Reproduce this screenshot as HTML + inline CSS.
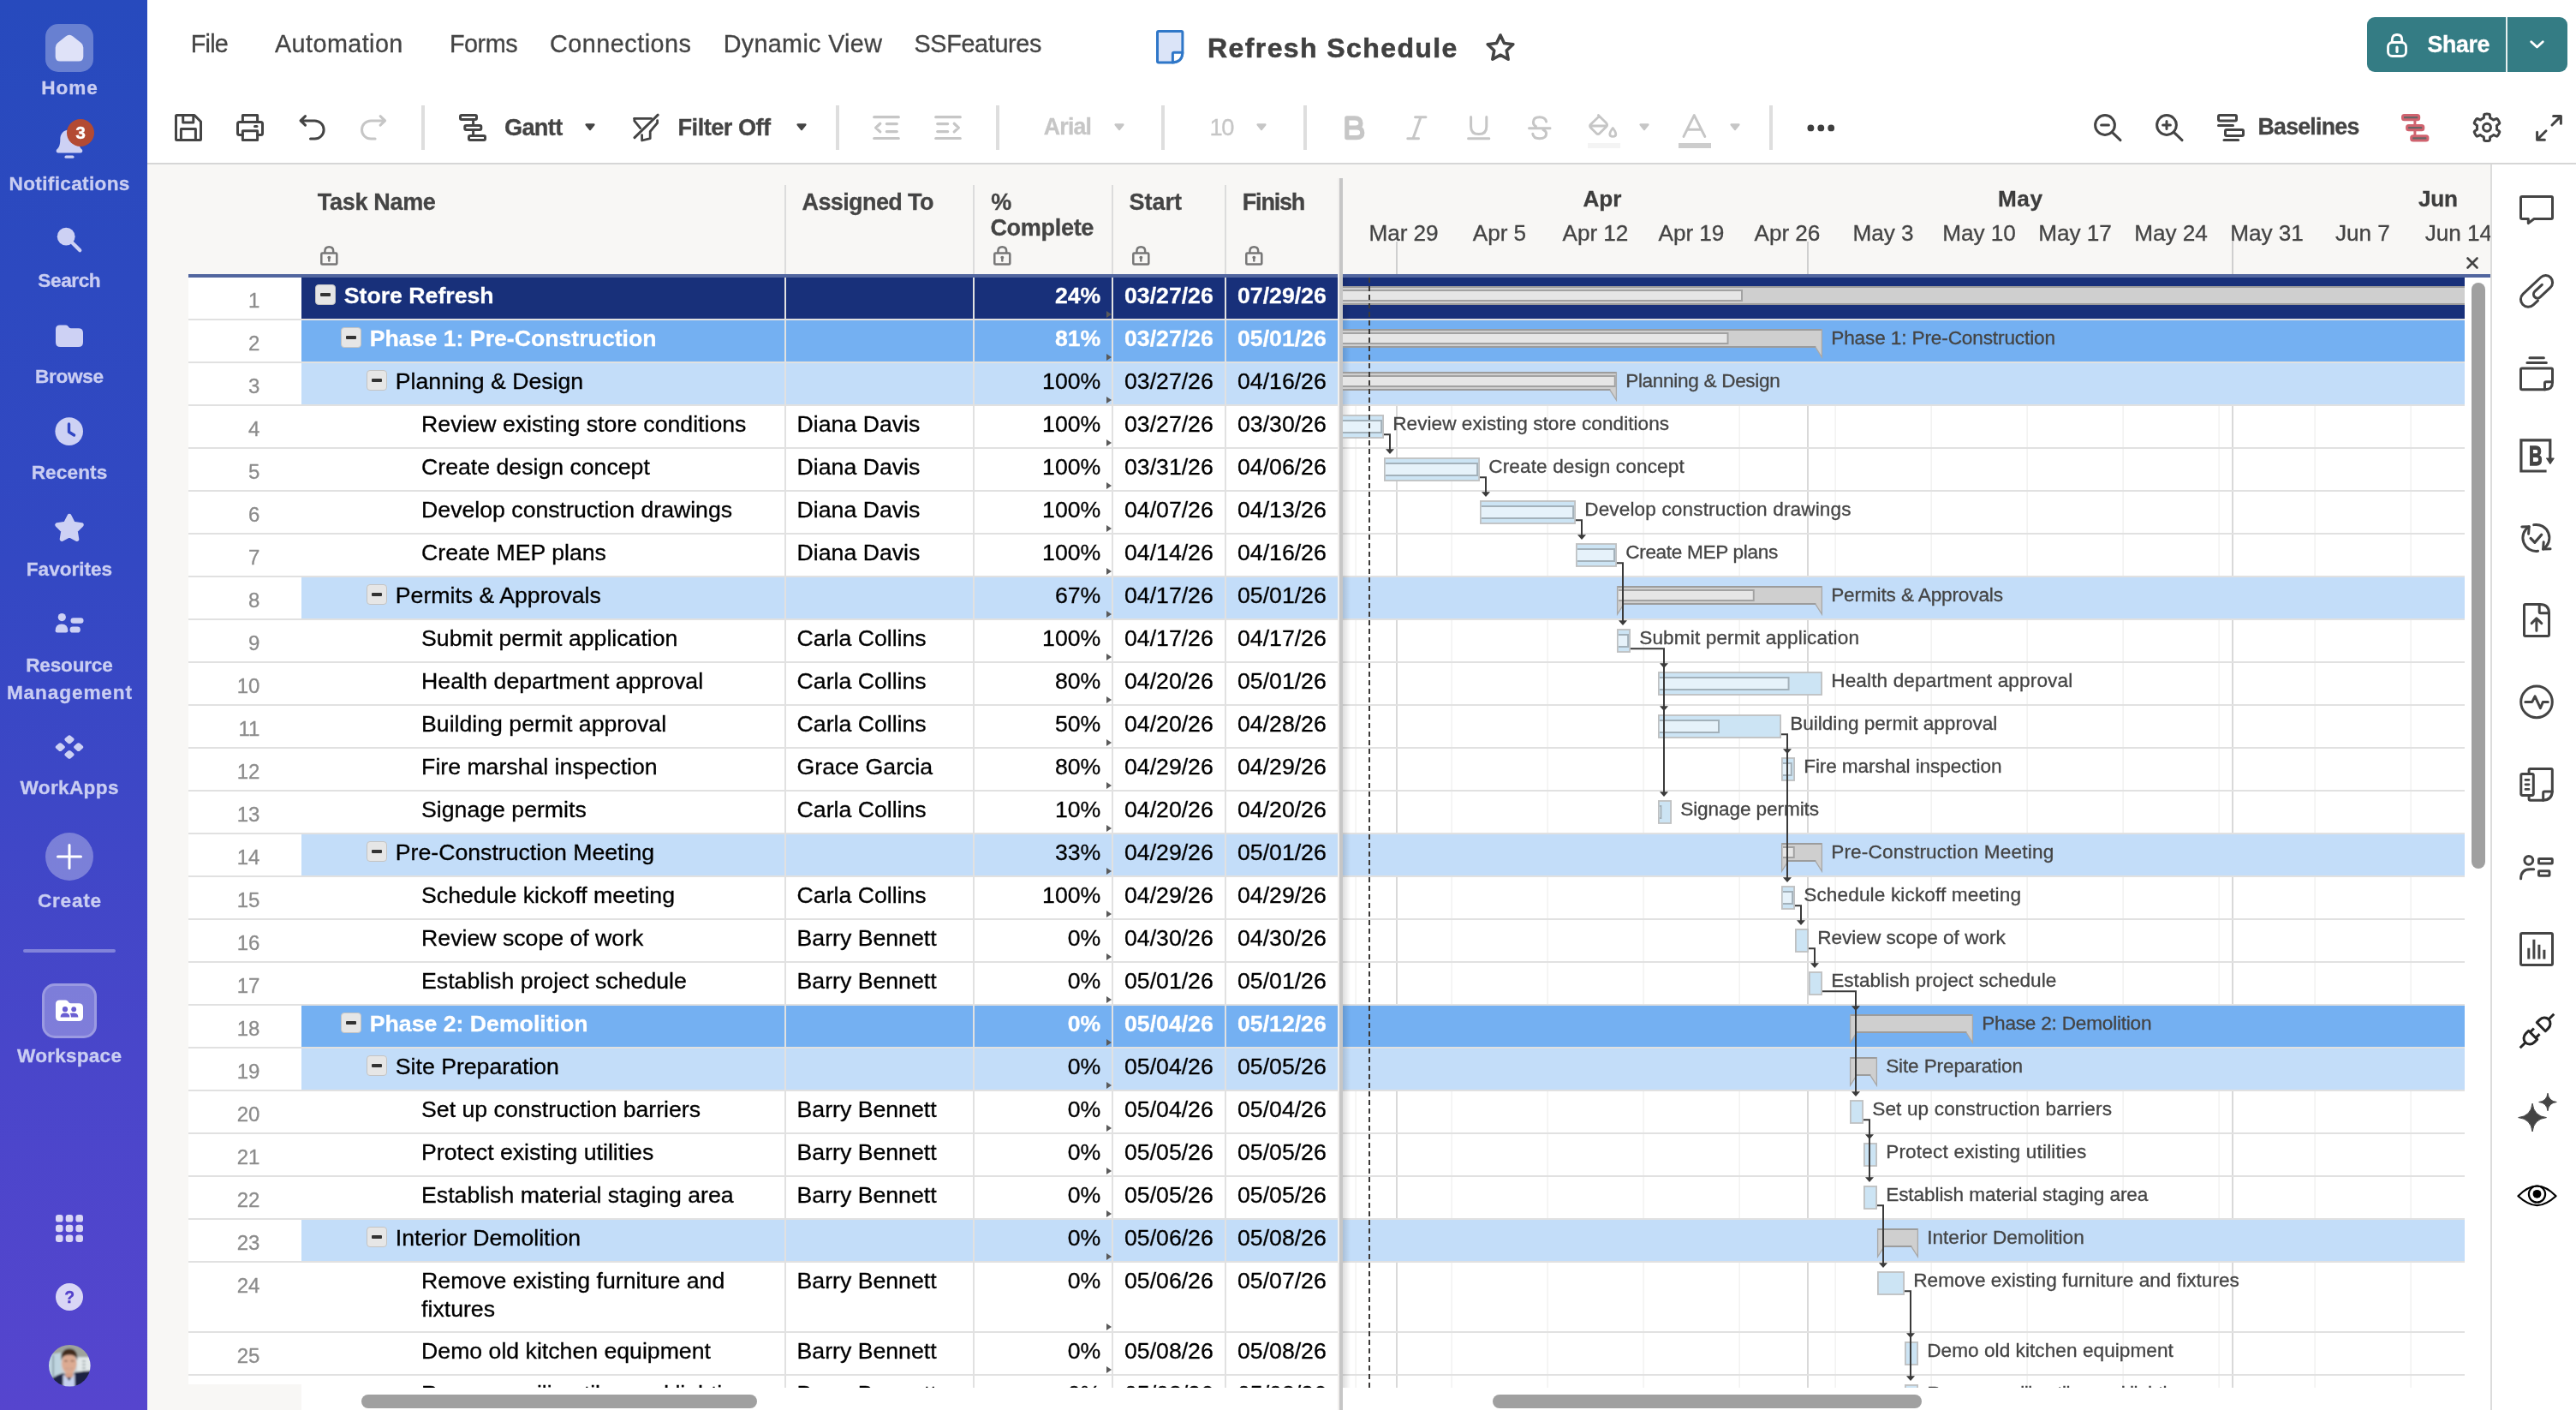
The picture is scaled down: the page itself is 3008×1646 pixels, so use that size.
<!DOCTYPE html>
<html lang="en"><head><meta charset="utf-8"><meta name="viewport" content="width=3008"><title>Refresh Schedule</title><style>
html,body{margin:0;padding:0}
body{width:3008px;height:1646px;overflow:hidden;background:#f8f7f5;position:relative;font-family:"Liberation Sans",sans-serif;}
#app{position:absolute;left:0;top:0;width:3008px;height:1646px;will-change:transform;}
.t{position:absolute;line-height:1;white-space:nowrap;-webkit-text-stroke:0.3px currentColor;}
.b{position:absolute;box-sizing:border-box;}
svg{overflow:visible}
svg text{font-family:"Liberation Sans",sans-serif;stroke:#444;stroke-width:.3px;}
</style></head><body>
<div id="app">
<div class="b" style="left:0.00px;top:0.00px;width:172.00px;height:1646.00px;background:linear-gradient(180deg,#274abd 0%,#3348c3 40%,#4946ca 75%,#5645ce 100%);"></div>
<div class="b" style="left:53.00px;top:27.60px;width:56.00px;height:56.00px;background:rgba(255,255,255,.30);border-radius:15px;"></div>
<svg class="b" style="left:61.00px;top:35.00px;" width="40" height="40" viewBox="0 0 40 40"><path d="M16.4 8.2 Q20 5.4 23.6 8.2 L33 15.8 Q35.3 17.6 35.3 20.4 V31 Q35.3 35.5 30.8 35.5 H9.2 Q4.7 35.5 4.7 31 V20.4 Q4.7 17.6 7 15.8 Z" fill="#dfe2f8" stroke="#dfe2f8" stroke-width="2" stroke-linejoin="round"/></svg>
<span class="t" style="left:48.20px;top:92.27px;font-size:22.60px;color:#c9cdf2;letter-spacing:0.937px;font-weight:700;">Home</span>
<svg class="b" style="left:61.00px;top:148.00px;" width="40" height="40" viewBox="0 0 40 40"><path d="M20 3.6 C12.5 3.6 9.3 9 9.3 15 C9.3 21.5 7.6 24.5 5.3 26.6 C4.2 27.7 4.6 30.6 6.8 30.6 H33.2 C35.4 30.6 35.8 27.7 34.7 26.6 C32.4 24.5 30.7 21.5 30.7 15 C30.7 9 27.5 3.6 20 3.6 Z" fill="#cdd1f4"/><rect x="14.5" y="33.6" width="11" height="3.2" rx="1.6" fill="#cdd1f4"/></svg>
<div class="b" style="left:78.00px;top:139.00px;width:32.00px;height:32.00px;background:#b34a33;border-radius:16px;"></div>
<span class="t" style="left:88.16px;top:143.92px;font-size:21.00px;color:#fff;font-weight:700;">3</span>
<span class="t" style="left:10.60px;top:204.07px;font-size:22.60px;color:#c9cdf2;letter-spacing:0.328px;font-weight:700;">Notifications</span>
<svg class="b" style="left:61.00px;top:260.00px;" width="40" height="40" viewBox="0 0 40 40"><circle cx="16.2" cy="16.2" r="10.4" fill="#cdd1f4"/><path d="M23 23 L32.3 32.3" stroke="#cdd1f4" stroke-width="4.2" stroke-linecap="round"/></svg>
<span class="t" style="left:44.35px;top:317.17px;font-size:22.60px;color:#c9cdf2;letter-spacing:-0.416px;font-weight:700;">Search</span>
<svg class="b" style="left:61.00px;top:372.00px;" width="40" height="40" viewBox="0 0 40 40"><path d="M4 12.5 Q4 7.6 9 7.6 H15.5 Q17.5 7.6 18.6 9 L19.6 10.2 Q20.4 11.2 22 11.2 H30.5 Q36 11.2 36 16.5 V27.5 Q36 33 30.5 33 H9.5 Q4 33 4 27.5 Z" fill="#cdd1f4"/></svg>
<span class="t" style="left:41.00px;top:428.77px;font-size:22.60px;color:#c9cdf2;letter-spacing:-0.328px;font-weight:700;">Browse</span>
<svg class="b" style="left:61.00px;top:484.00px;" width="40" height="40" viewBox="0 0 40 40"><circle cx="19.7" cy="19.6" r="16.3" fill="#cdd1f4"/><path d="M19.5 11 V20.3 L25.5 24" stroke="#3147c4" stroke-width="3.4" fill="none" stroke-linecap="round" stroke-linejoin="round"/></svg>
<span class="t" style="left:36.65px;top:541.27px;font-size:22.60px;color:#c9cdf2;letter-spacing:0.129px;font-weight:700;">Recents</span>
<svg class="b" style="left:61.00px;top:596.00px;" width="40" height="40" viewBox="0 0 40 40"><path d="M20.00 6.30 L24.47 15.15 L34.27 16.66 L27.23 23.65 L28.82 33.44 L20.00 28.90 L11.18 33.44 L12.77 23.65 L5.73 16.66 L15.53 15.15 Z" fill="#cdd1f4" stroke="#cdd1f4" stroke-width="5" stroke-linejoin="round"/></svg>
<span class="t" style="left:30.85px;top:653.77px;font-size:22.60px;color:#c9cdf2;letter-spacing:-0.023px;font-weight:700;">Favorites</span>
<svg class="b" style="left:61.00px;top:708.00px;" width="40" height="40" viewBox="0 0 40 40"><circle cx="11.3" cy="12.6" r="4.6" fill="#cdd1f4"/><path d="M3.6 28.5 Q3.6 20.5 11 20.5 Q18.3 20.5 18.3 28.5 Q18.3 30.6 16 30.6 H6 Q3.6 30.6 3.6 28.5 Z" fill="#cdd1f4"/><rect x="21.5" y="13.3" width="15" height="6.4" rx="3.2" fill="#cdd1f4"/><rect x="20.6" y="23.4" width="12.2" height="7.2" rx="3.4" fill="#cdd1f4"/></svg>
<span class="t" style="left:30.20px;top:765.67px;font-size:22.60px;color:#c9cdf2;letter-spacing:-0.200px;font-weight:700;">Resource</span>
<span class="t" style="left:7.90px;top:797.67px;font-size:22.60px;color:#c9cdf2;letter-spacing:0.896px;font-weight:700;">Management</span>
<svg class="b" style="left:61.00px;top:852.00px;" width="40" height="40" viewBox="0 0 40 40"><g transform="translate(20.00 11.30) scale(1 .88) rotate(45)"><rect x="-4.65" y="-4.65" width="9.30" height="9.30" rx="2.7" fill="#cdd1f4"/></g><g transform="translate(9.30 20.10) scale(1 .88) rotate(45)"><rect x="-4.65" y="-4.65" width="9.30" height="9.30" rx="2.7" fill="#cdd1f4"/></g><g transform="translate(30.70 20.10) scale(1 .88) rotate(45)"><rect x="-4.65" y="-4.65" width="9.30" height="9.30" rx="2.7" fill="#cdd1f4"/></g><g transform="translate(20.00 28.90) scale(1 .88) rotate(45)"><rect x="-4.65" y="-4.65" width="9.30" height="9.30" rx="2.7" fill="#cdd1f4"/></g></svg>
<span class="t" style="left:23.50px;top:909.37px;font-size:22.60px;color:#c9cdf2;letter-spacing:0.344px;font-weight:700;">WorkApps</span>
<div class="b" style="left:53.00px;top:972.30px;width:56.00px;height:56.00px;background:rgba(255,255,255,.31);border-radius:28px;"></div>
<svg class="b" style="left:61.00px;top:980.30px;" width="40" height="40" viewBox="0 0 40 40"><path d="M20 6.5 V33.5 M6.5 20 H33.5" stroke="#fff" stroke-width="3" stroke-linecap="round"/></svg>
<span class="t" style="left:43.90px;top:1041.27px;font-size:22.60px;color:#c9cdf2;letter-spacing:0.770px;font-weight:700;">Create</span>
<div class="b" style="left:27.30px;top:1108.00px;width:107.30px;height:4.00px;background:rgba(255,255,255,.33);border-radius:2px;"></div>
<div class="b" style="left:48.80px;top:1148.00px;width:64.40px;height:64.00px;background:rgba(255,255,255,.30);border:3px solid rgba(255,255,255,.22);border-radius:15px;"></div>
<svg class="b" style="left:61.00px;top:1160.00px;" width="40" height="40" viewBox="0 0 40 40"><path d="M4 12 Q4 7.4 8.8 7.4 H15.2 Q17 7.4 18.2 8.8 L19.4 10.2 Q20.3 11.2 21.8 11.2 H31 Q36 11.2 36 16.2 V27 Q36 32 31 32 H9 Q4 32 4 27 Z" fill="#fff"/><circle cx="15" cy="18.2" r="3.1" fill="#6a5fd2"/><path d="M9.6 27.4 Q9.6 22.6 15 22.6 Q20.4 22.6 20.4 27.4 Z" fill="#6a5fd2"/><circle cx="25.2" cy="18.2" r="2.9" fill="#6a5fd2"/><path d="M22 27.4 Q21.8 24 20.6 22.9 Q22.5 22.3 25.2 22.4 Q30.4 22.6 30.4 27.4 Z" fill="#6a5fd2"/></svg>
<span class="t" style="left:20.00px;top:1221.57px;font-size:22.60px;color:#c9cdf2;letter-spacing:0.228px;font-weight:700;">Workspace</span>
<svg class="b" style="left:65.00px;top:1418.00px;" width="32" height="32" viewBox="0 0 32 32"><rect x="0.0" y="0.0" width="8.6" height="8.6" rx="3.2" fill="#d9d6f5"/><rect x="11.7" y="0.0" width="8.6" height="8.6" rx="3.2" fill="#d9d6f5"/><rect x="23.4" y="0.0" width="8.6" height="8.6" rx="3.2" fill="#d9d6f5"/><rect x="0.0" y="11.7" width="8.6" height="8.6" rx="3.2" fill="#d9d6f5"/><rect x="11.7" y="11.7" width="8.6" height="8.6" rx="3.2" fill="#d9d6f5"/><rect x="23.4" y="11.7" width="8.6" height="8.6" rx="3.2" fill="#d9d6f5"/><rect x="0.0" y="23.4" width="8.6" height="8.6" rx="3.2" fill="#d9d6f5"/><rect x="11.7" y="23.4" width="8.6" height="8.6" rx="3.2" fill="#d9d6f5"/><rect x="23.4" y="23.4" width="8.6" height="8.6" rx="3.2" fill="#d9d6f5"/></svg>
<div class="b" style="left:65.00px;top:1497.60px;width:32.40px;height:32.40px;background:#d9d6f5;border-radius:50%;"></div>
<span class="t" style="left:75.24px;top:1504.59px;font-size:19.50px;color:#5340cb;font-weight:700;">?</span>
<svg class="b" style="left:56.70px;top:1569.80px;" width="48.6" height="48.6" viewBox="0 0 48.6 48.6"><defs><clipPath id="avc"><circle cx="24.3" cy="24.3" r="24.3"/></clipPath><filter id="avb" x="-10%" y="-10%" width="120%" height="120%"><feGaussianBlur stdDeviation="0.9"/></filter></defs><g clip-path="url(#avc)"><g filter="url(#avb)"><rect x="-3" y="-3" width="55" height="55" fill="#c9d3d8"/><rect x="-3" y="-3" width="55" height="17" fill="#9ea39c"/><path d="M-3 12 L14 9 V40 H-3 Z" fill="#bfd5e0"/><rect x="4" y="12" width="2.2" height="30" fill="#93a6b0"/><path d="M33 15 H52 V34 H33 Z" fill="#e3e9ea"/><path d="M39 18 h4 v2 h-4 z M39 22 h4 v2 h-4 z M39 26 h4 v2 h-4 z M39 30 h4 v2 h-4 z" fill="#a9b4b8"/><path d="M2 41 Q10 34 17 33 L24 38 L31 32 Q40 31 50 30 V52 H2 Z" fill="#1f2442"/><path d="M16.5 35 L19.4 35.5 L23.8 42 L28.4 34.6 L30.4 34 L30.5 52 H16.5 Z" fill="#c6d2ee"/><rect x="19.4" y="28" width="9" height="10" fill="#d39f88"/><ellipse cx="23.8" cy="21.6" rx="8.7" ry="12.2" fill="#dcaa92"/><path d="M14.6 18 Q13.8 4.4 24 4.4 Q34.2 4.4 33.2 18 Q31.8 11.6 24 11.6 Q16.2 11.6 14.6 18 Z" fill="#40291e"/><path d="M19.6 27.4 Q23.8 30.6 28 27.4 Q23.8 29 19.6 27.4 Z" fill="#f3ebe6" stroke="#b87f6e" stroke-width=".5"/><path d="M18 18.6 h4 M25.6 18.6 h4" stroke="#7a5546" stroke-width="1.1"/></g></g></svg>
<div class="b" style="left:172.00px;top:0.00px;width:2836.00px;height:190.00px;background:#fff;"></div>
<div class="b" style="left:172.00px;top:190.00px;width:2836.00px;height:2.00px;background:#d6d6d6;"></div>
<span class="t" style="left:222.80px;top:36.95px;font-size:28.76px;color:#444;letter-spacing:-0.782px;">File</span>
<span class="t" style="left:321.00px;top:36.95px;font-size:28.76px;color:#444;letter-spacing:0.434px;">Automation</span>
<span class="t" style="left:525.00px;top:36.95px;font-size:28.76px;color:#444;letter-spacing:-0.471px;">Forms</span>
<span class="t" style="left:642.00px;top:36.95px;font-size:28.76px;color:#444;letter-spacing:0.511px;">Connections</span>
<span class="t" style="left:844.70px;top:36.95px;font-size:28.76px;color:#444;letter-spacing:0.329px;">Dynamic View</span>
<span class="t" style="left:1067.40px;top:36.95px;font-size:28.76px;color:#444;letter-spacing:-0.308px;">SSFeatures</span>
<svg class="b" style="left:1349.60px;top:35.20px;" width="32.4" height="39.4" viewBox="0 0 32.4 39.4"><path d="M3 1.5 H29.4 Q30.9 1.5 30.9 3 V25 Q30.9 37.9 18.5 37.9 H3 Q1.5 37.9 1.5 36.4 V3 Q1.5 1.5 3 1.5 Z" fill="#dbe4f8" stroke="#2f77c8" stroke-width="3"/><path d="M30.9 26.3 H21 Q19.4 26.3 19.4 27.9 V37.9 Q30.4 37.4 30.9 26.3 Z" fill="#fff" stroke="#2f77c8" stroke-width="3" stroke-linejoin="round"/></svg>
<span class="t" style="left:1410.00px;top:39.51px;font-size:32.00px;color:#404040;letter-spacing:1.406px;font-weight:700;-webkit-text-stroke:0.55px #404040;">Refresh Schedule</span>
<svg class="b" style="left:1735.00px;top:37.50px;" width="34" height="35" viewBox="0 0 34 35"><path d="M17.00 3.00 L21.47 12.45 L31.84 13.78 L24.23 20.95 L26.17 31.22 L17.00 26.20 L7.83 31.22 L9.77 20.95 L2.16 13.78 L12.53 12.45 Z" fill="none" stroke="#444" stroke-width="3.6" stroke-linejoin="round"/></svg>
<div class="b" style="left:2764.00px;top:19.80px;width:234.00px;height:64.00px;background:#347c84;border-radius:9px;"></div>
<div class="b" style="left:2925.70px;top:19.80px;width:2.40px;height:64.00px;background:#e6efef;"></div>
<svg class="b" style="left:2786.50px;top:38.50px;" width="24" height="28" viewBox="0 0 24 28"><rect x="1.5" y="10.5" width="21" height="16" rx="5" fill="none" stroke="#fff" stroke-width="2.8"/><path d="M6.3 10.5 V7.2 Q6.3 1.5 12 1.5 Q17.7 1.5 17.7 7.2 V10.5" fill="none" stroke="#fff" stroke-width="2.8"/><path d="M12 16 V21.5" stroke="#fff" stroke-width="3.2" stroke-linecap="round"/></svg>
<span class="t" style="left:2834.60px;top:38.86px;font-size:26.74px;color:#fff;letter-spacing:-0.358px;font-weight:700;">Share</span>
<svg class="b" style="left:2953.70px;top:47.00px;" width="17" height="10" viewBox="0 0 17 10"><path d="M1.7 1.7 L8.5 8 L15.3 1.7" fill="none" stroke="#fff" stroke-width="2.8" stroke-linecap="round" stroke-linejoin="round"/></svg>
<svg class="b" style="left:204.00px;top:133.00px;" width="32" height="32" viewBox="0 0 32 32"><g fill="none" stroke="#444" stroke-width="3" stroke-linecap="round" stroke-linejoin="round"><path d="M1.5 2.5 Q1.5 1.5 2.5 1.5 H23 L30.5 9 V29.5 Q30.5 30.5 29.5 30.5 H2.5 Q1.5 30.5 1.5 29.5 Z"/><path d="M9.7 1.5 V10 H21.8 V1.5"/><path d="M7.4 30.5 V17.6 H24.4 V30.5"/></g></svg>
<svg class="b" style="left:276.20px;top:133.00px;" width="32" height="32" viewBox="0 0 32 32"><g fill="none" stroke="#444" stroke-width="3" stroke-linecap="round" stroke-linejoin="round"><path d="M7.4 24.5 H3.5 Q1.5 24.5 1.5 22.5 V11.5 Q1.5 9.5 3.5 9.5 H28.5 Q30.5 9.5 30.5 11.5 V22.5 Q30.5 24.5 28.5 24.5 H24.6"/><path d="M7.4 9.5 V1.5 H24.6 V9.5"/><rect x="7.4" y="19.7" width="17.2" height="10.8"/><path d="M21.5 14.6 H24"/></g></svg>
<svg class="b" style="left:348.70px;top:134.00px;" width="32" height="30" viewBox="0 0 32 30"><g fill="none" stroke="#444" stroke-width="3" stroke-linecap="round" stroke-linejoin="round"><path d="M7.5 1.6 L2 6.9 L7.5 12.2 M2.4 6.9 H18.5 A10.6 10.6 0 0 1 18.5 28.1 H13.5"/></g></svg>
<svg class="b" style="left:420.50px;top:134.00px;" width="32" height="30" viewBox="0 0 32 30"><g transform="translate(30.6 0) scale(-1 1)" fill="none" stroke="#c6c6c6" stroke-width="3" stroke-linecap="round" stroke-linejoin="round"><path d="M7.5 1.6 L2 6.9 L7.5 12.2 M2.4 6.9 H18.5 A10.6 10.6 0 0 1 18.5 28.1 H13.5"/></g></svg>
<div class="b" style="left:492.00px;top:123.20px;width:4.00px;height:51.60px;background:#dedede;"></div>
<svg class="b" style="left:536.00px;top:133.00px;" width="32" height="32" viewBox="0 0 32 32"><g fill="none" stroke="#444" stroke-width="3" stroke-linecap="round" stroke-linejoin="round"><rect x="1.5" y="1.5" width="19" height="5" rx="1.5"/><rect x="6.8" y="13.6" width="19" height="5" rx="1.5"/><rect x="11.5" y="25.5" width="19" height="5" rx="1.5"/><path d="M16.6 6.5 V13.6 M16.6 18.6 V25.5"/></g></svg>
<span class="t" style="left:589.00px;top:134.89px;font-size:27.18px;color:#444;letter-spacing:-0.691px;font-weight:700;">Gantt</span>
<svg class="b" style="left:683.00px;top:144.40px;" width="12" height="8.6" viewBox="0 0 12 8.6"><path d="M1.6 1.4 H10.40 L6.00 7.00 Z" fill="#444" stroke="#444" stroke-width="2.4" stroke-linejoin="round"/></svg>
<svg class="b" style="left:739.00px;top:133.00px;" width="31" height="32" viewBox="0 0 31 32"><g fill="none" stroke="#444" stroke-width="2.8" stroke-linecap="round" stroke-linejoin="round"><path d="M1.8 5.3 H21.5"/><path d="M1.8 5.3 V8.2 L8.7 16.6"/><path d="M28.6 7.6 V10.5 L20.2 20.5 V28.6 L10.6 31 V24.6"/><path d="M29.2 1.2 L2 27.6" stroke-width="3"/></g></svg>
<span class="t" style="left:791.50px;top:134.89px;font-size:27.18px;color:#444;letter-spacing:-0.505px;font-weight:700;">Filter Off</span>
<svg class="b" style="left:929.80px;top:144.40px;" width="12" height="8.6" viewBox="0 0 12 8.6"><path d="M1.6 1.4 H10.40 L6.00 7.00 Z" fill="#444" stroke="#444" stroke-width="2.4" stroke-linejoin="round"/></svg>
<div class="b" style="left:975.50px;top:123.20px;width:4.00px;height:51.60px;background:#dedede;"></div>
<svg class="b" style="left:1018.80px;top:134.80px;" width="32" height="28.2" viewBox="0 0 32 28.2"><g fill="none" stroke="#c6c6c6" stroke-width="3.2" stroke-linecap="round" stroke-linejoin="round"><path d="M1.7 1.7 H30.3 M1.7 26.5 H30.3 M16.3 9.6 H28.3 M16.3 18.6 H28.3 M8.8 9.3 L3.6 14.1 L8.8 18.9"/></g></svg>
<svg class="b" style="left:1091.00px;top:134.80px;" width="32" height="28.2" viewBox="0 0 32 28.2"><g transform="translate(32 0) scale(-1 1)" fill="none" stroke="#c6c6c6" stroke-width="3.2" stroke-linecap="round" stroke-linejoin="round"><path d="M1.7 1.7 H30.3 M1.7 26.5 H30.3 M16.3 9.6 H28.3 M16.3 18.6 H28.3 M8.8 9.3 L3.6 14.1 L8.8 18.9"/></g></svg>
<div class="b" style="left:1163.20px;top:123.20px;width:4.00px;height:51.60px;background:#dedede;"></div>
<span class="t" style="left:1218.80px;top:135.26px;font-size:26.74px;color:#c6c6c6;letter-spacing:-0.814px;font-weight:700;">Arial</span>
<svg class="b" style="left:1301.00px;top:144.40px;" width="12" height="8.6" viewBox="0 0 12 8.6"><path d="M1.6 1.4 H10.40 L6.00 7.00 Z" fill="#c6c6c6" stroke="#c6c6c6" stroke-width="2.4" stroke-linejoin="round"/></svg>
<div class="b" style="left:1356.00px;top:123.20px;width:4.00px;height:51.60px;background:#dedede;"></div>
<span class="t" style="left:1412.50px;top:134.97px;font-size:27.33px;color:#c6c6c6;letter-spacing:-1.395px;">10</span>
<svg class="b" style="left:1467.00px;top:144.40px;" width="12" height="8.6" viewBox="0 0 12 8.6"><path d="M1.6 1.4 H10.40 L6.00 7.00 Z" fill="#c6c6c6" stroke="#c6c6c6" stroke-width="2.4" stroke-linejoin="round"/></svg>
<div class="b" style="left:1521.60px;top:123.20px;width:4.00px;height:51.60px;background:#dedede;"></div>
<svg class="b" style="left:1569.80px;top:134.80px;" width="24" height="28.4" viewBox="0 0 24 28.4"><path d="M2.8 2.8 H12 Q19 2.8 19 9 Q19 14 13 14 H2.8 Z M2.8 14 H14 Q20.8 14 20.8 20 Q20.8 25.6 14 25.6 H2.8 Z" fill="none" stroke="#c6c6c6" stroke-width="5.2" stroke-linejoin="round"/></svg>
<svg class="b" style="left:1641.90px;top:134.80px;" width="25" height="28.4" viewBox="0 0 25 28.4"><g fill="none" stroke="#c6c6c6" stroke-width="3" stroke-linecap="round" stroke-linejoin="round"><path d="M10.5 1.7 H23 M1.8 26.7 H14.5 M17 1.7 L8 26.7"/></g></svg>
<svg class="b" style="left:1712.70px;top:134.80px;" width="28" height="28.4" viewBox="0 0 28 28.4"><g fill="none" stroke="#c6c6c6" stroke-width="3" stroke-linecap="round" stroke-linejoin="round"><path d="M4.6 1.6 V13 Q4.6 21.6 13.7 21.6 Q22.8 21.6 22.8 13 V1.6 M1.6 26.7 H25.8"/></g></svg>
<svg class="b" style="left:1784.00px;top:134.80px;" width="28" height="28.4" viewBox="0 0 28 28.4"><g fill="none" stroke="#c6c6c6" stroke-width="3" stroke-linecap="round" stroke-linejoin="round"><path d="M21.6 7 Q20.6 1.7 13.8 1.7 Q6.4 1.7 6.4 7.6 Q6.4 11 9.5 12.6 M1.6 14.7 H26 M18 16.6 Q21.6 18 21.6 21 Q21.6 26.7 13.8 26.7 Q6.6 26.7 5.8 21.2"/></g></svg>
<svg class="b" style="left:1855.00px;top:133.00px;" width="34" height="28" viewBox="0 0 34 28"><g fill="none" stroke="#c6c6c6" stroke-width="2.8" stroke-linecap="round" stroke-linejoin="round"><path d="M11.4 1.6 L20.6 10.6 Q22.6 12.8 20.6 15 L13 22.6 Q11 24.4 9 22.6 L2.4 16 Q0.8 14 2.4 12.2 L12.6 2.6 M2.4 14 H21"/><path d="M28.3 16.5 Q31.8 21 31.8 23.4 Q31.8 26.4 28.3 26.4 Q24.8 26.4 24.8 23.4 Q24.8 21 28.3 16.5 Z"/></g></svg>
<div class="b" style="left:1854.00px;top:167.00px;width:38.00px;height:5.60px;background:#f4f4f4;"></div>
<svg class="b" style="left:1914.00px;top:144.40px;" width="12" height="8.6" viewBox="0 0 12 8.6"><path d="M1.6 1.4 H10.40 L6.00 7.00 Z" fill="#c6c6c6" stroke="#c6c6c6" stroke-width="2.4" stroke-linejoin="round"/></svg>
<svg class="b" style="left:1963.60px;top:133.00px;" width="29" height="28" viewBox="0 0 29 28"><g fill="none" stroke="#c6c6c6" stroke-width="3" stroke-linecap="round" stroke-linejoin="round"><path d="M2 26.4 L14.3 1.6 L26.8 26.4 M6.2 18.2 H22.6"/></g></svg>
<div class="b" style="left:1960.00px;top:167.00px;width:38.00px;height:5.80px;background:#cdcdcd;"></div>
<svg class="b" style="left:2019.70px;top:144.40px;" width="12" height="8.6" viewBox="0 0 12 8.6"><path d="M1.6 1.4 H10.40 L6.00 7.00 Z" fill="#c6c6c6" stroke="#c6c6c6" stroke-width="2.4" stroke-linejoin="round"/></svg>
<div class="b" style="left:2066.00px;top:123.20px;width:4.00px;height:51.60px;background:#dedede;"></div>
<svg class="b" style="left:2109.70px;top:144.60px;" width="33" height="9" viewBox="0 0 33 9"><circle cx="4.4" cy="4.4" r="3.9" fill="#3f3f3f"/><circle cx="16.3" cy="4.4" r="3.9" fill="#3f3f3f"/><circle cx="28.2" cy="4.4" r="3.9" fill="#3f3f3f"/></svg>
<svg class="b" style="left:2444.80px;top:133.00px;" width="33" height="32" viewBox="0 0 33 32"><g fill="none" stroke="#444" stroke-width="3" stroke-linecap="round" stroke-linejoin="round"><circle cx="13" cy="13" r="11.4"/><path d="M21.3 21.3 L31 30.6"/><path d="M8.6 13 H17.4"/></g></svg>
<svg class="b" style="left:2517.00px;top:133.00px;" width="33" height="32" viewBox="0 0 33 32"><g fill="none" stroke="#444" stroke-width="3" stroke-linecap="round" stroke-linejoin="round"><circle cx="13" cy="13" r="11.4"/><path d="M21.3 21.3 L31 30.6"/><path d="M8.6 13 H17.4 M13 8.6 V17.4"/></g></svg>
<svg class="b" style="left:2588.90px;top:133.00px;" width="33" height="32" viewBox="0 0 33 32"><g fill="none" stroke="#444" stroke-width="3" stroke-linecap="round" stroke-linejoin="round"><rect x="1.5" y="1.5" width="21" height="6.6" rx="1.5"/><path d="M1.5 13.5 H18.5"/><rect x="9.5" y="18.5" width="21" height="7" rx="1.5"/><path d="M8 30.5 H24.6"/></g></svg>
<span class="t" style="left:2636.50px;top:135.26px;font-size:26.74px;color:#444;letter-spacing:-0.760px;font-weight:700;">Baselines</span>
<svg class="b" style="left:2803.90px;top:132.80px;" width="33" height="33" viewBox="0 0 33 33"><g fill="#666" stroke="#d0636f" stroke-width="3"><path d="M15.9 6 V26" fill="none"/><rect x="1.5" y="1.5" width="19.2" height="5.2" rx="2"/><rect x="6.6" y="13.6" width="19.2" height="5.2" rx="2"/><rect x="11.7" y="25.7" width="19.2" height="5.2" rx="2"/></g></svg>
<svg class="b" style="left:2886.00px;top:131.00px;" width="36" height="36" viewBox="0 0 36 36"><g fill="none" stroke="#444" stroke-width="3" stroke-linecap="round" stroke-linejoin="round"><path d="M18.00 2.10 L18.41 2.11 L18.82 2.12 L19.23 2.15 L19.64 2.19 L20.05 2.23 L20.46 2.29 L20.86 2.36 L21.21 2.69 L21.43 3.50 L21.53 4.62 L21.58 5.72 L21.66 6.53 L21.87 6.87 L22.16 6.97 L22.44 7.08 L22.72 7.20 L22.99 7.33 L23.27 7.46 L23.54 7.61 L23.80 7.75 L24.06 7.91 L24.32 8.07 L24.57 8.24 L24.82 8.42 L25.06 8.60 L25.30 8.79 L25.53 8.98 L25.93 8.99 L26.67 8.66 L27.65 8.15 L28.67 7.68 L29.48 7.46 L29.94 7.60 L30.20 7.92 L30.46 8.24 L30.70 8.57 L30.94 8.91 L31.17 9.25 L31.39 9.60 L31.60 9.95 L31.80 10.31 L31.99 10.67 L32.17 11.04 L32.34 11.41 L32.50 11.79 L32.66 12.17 L32.80 12.56 L32.69 13.03 L32.10 13.62 L31.18 14.27 L30.25 14.86 L29.59 15.34 L29.41 15.69 L29.46 15.99 L29.50 16.29 L29.54 16.59 L29.56 16.89 L29.58 17.19 L29.60 17.50 L29.60 17.80 L29.60 18.10 L29.58 18.41 L29.56 18.71 L29.54 19.01 L29.50 19.31 L29.46 19.61 L29.41 19.91 L29.59 20.26 L30.25 20.74 L31.18 21.33 L32.10 21.98 L32.69 22.57 L32.80 23.04 L32.66 23.43 L32.50 23.81 L32.34 24.19 L32.17 24.56 L31.99 24.93 L31.80 25.29 L31.60 25.65 L31.39 26.00 L31.17 26.35 L30.94 26.69 L30.70 27.03 L30.46 27.36 L30.20 27.68 L29.94 28.00 L29.48 28.14 L28.67 27.92 L27.65 27.45 L26.67 26.94 L25.93 26.61 L25.53 26.62 L25.30 26.81 L25.06 27.00 L24.82 27.18 L24.57 27.36 L24.32 27.53 L24.06 27.69 L23.80 27.85 L23.54 27.99 L23.27 28.14 L22.99 28.27 L22.72 28.40 L22.44 28.52 L22.16 28.63 L21.87 28.73 L21.66 29.07 L21.58 29.88 L21.53 30.98 L21.43 32.10 L21.21 32.91 L20.86 33.24 L20.46 33.31 L20.05 33.37 L19.64 33.41 L19.23 33.45 L18.82 33.48 L18.41 33.49 L18.00 33.50 L17.59 33.49 L17.18 33.48 L16.77 33.45 L16.36 33.41 L15.95 33.37 L15.54 33.31 L15.14 33.24 L14.79 32.91 L14.57 32.10 L14.47 30.98 L14.42 29.88 L14.34 29.07 L14.13 28.73 L13.84 28.63 L13.56 28.52 L13.28 28.40 L13.01 28.27 L12.73 28.14 L12.46 27.99 L12.20 27.85 L11.94 27.69 L11.68 27.53 L11.43 27.36 L11.18 27.18 L10.94 27.00 L10.70 26.81 L10.47 26.62 L10.07 26.61 L9.33 26.94 L8.35 27.45 L7.33 27.92 L6.52 28.14 L6.06 28.00 L5.80 27.68 L5.54 27.36 L5.30 27.03 L5.06 26.69 L4.83 26.35 L4.61 26.00 L4.40 25.65 L4.20 25.29 L4.01 24.93 L3.83 24.56 L3.66 24.19 L3.50 23.81 L3.34 23.43 L3.20 23.04 L3.31 22.57 L3.90 21.98 L4.82 21.33 L5.75 20.74 L6.41 20.26 L6.59 19.91 L6.54 19.61 L6.50 19.31 L6.46 19.01 L6.44 18.71 L6.42 18.41 L6.40 18.10 L6.40 17.80 L6.40 17.50 L6.42 17.19 L6.44 16.89 L6.46 16.59 L6.50 16.29 L6.54 15.99 L6.59 15.69 L6.41 15.34 L5.75 14.86 L4.82 14.27 L3.90 13.62 L3.31 13.03 L3.20 12.56 L3.34 12.17 L3.50 11.79 L3.66 11.41 L3.83 11.04 L4.01 10.67 L4.20 10.31 L4.40 9.95 L4.61 9.60 L4.83 9.25 L5.06 8.91 L5.30 8.57 L5.54 8.24 L5.80 7.92 L6.06 7.60 L6.52 7.46 L7.33 7.68 L8.35 8.15 L9.33 8.66 L10.07 8.99 L10.47 8.98 L10.70 8.79 L10.94 8.60 L11.18 8.42 L11.43 8.24 L11.68 8.07 L11.94 7.91 L12.20 7.75 L12.46 7.61 L12.73 7.46 L13.01 7.33 L13.28 7.20 L13.56 7.08 L13.84 6.97 L14.13 6.87 L14.34 6.53 L14.42 5.72 L14.47 4.62 L14.57 3.50 L14.79 2.69 L15.14 2.36 L15.54 2.29 L15.95 2.23 L16.36 2.19 L16.77 2.15 L17.18 2.12 L17.59 2.11 Z"/><circle cx="18" cy="17.8" r="4.5"/></g></svg>
<svg class="b" style="left:2960.50px;top:133.90px;" width="31" height="31" viewBox="0 0 31 31"><g fill="none" stroke="#444" stroke-width="3" stroke-linecap="round" stroke-linejoin="round"><path d="M19 12 L29.4 1.6 M20.6 1.6 H29.4 V10.2 M12 18.8 L1.6 29.2 M1.6 20.2 V29.2 H10.4"/></g></svg>
<span class="t" style="left:370.80px;top:222.91px;font-size:27.03px;color:#444;letter-spacing:-0.320px;font-weight:700;">Task Name</span>
<span class="t" style="left:936.50px;top:222.91px;font-size:27.03px;color:#444;letter-spacing:-0.612px;font-weight:700;">Assigned To</span>
<span class="t" style="left:1157.30px;top:222.91px;font-size:27.03px;color:#444;font-weight:700;">%</span>
<span class="t" style="left:1156.40px;top:253.21px;font-size:27.03px;color:#444;letter-spacing:-0.297px;font-weight:700;">Complete</span>
<span class="t" style="left:1318.50px;top:222.91px;font-size:27.03px;color:#444;letter-spacing:-0.024px;font-weight:700;">Start</span>
<span class="t" style="left:1450.80px;top:222.91px;font-size:27.03px;color:#444;letter-spacing:-1.200px;font-weight:700;">Finish</span>
<div class="b" style="left:916.00px;top:216.00px;width:2.00px;height:104.00px;background:#dcdcdc;"></div>
<div class="b" style="left:1136.00px;top:216.00px;width:2.00px;height:104.00px;background:#dcdcdc;"></div>
<div class="b" style="left:1298.00px;top:216.00px;width:2.00px;height:104.00px;background:#dcdcdc;"></div>
<div class="b" style="left:1430.00px;top:216.00px;width:2.00px;height:104.00px;background:#dcdcdc;"></div>
<svg class="b" style="left:374.00px;top:287.00px;" width="21" height="23" viewBox="0 0 21 23"><rect x="1.3" y="8.6" width="18" height="13" rx="1.2" fill="none" stroke="#777" stroke-width="2.5"/><path d="M5.4 8.6 V6.2 Q5.4 1.3 10.3 1.3 Q15.2 1.3 15.2 6.2 V8.6" fill="none" stroke="#777" stroke-width="2.5"/><circle cx="10.3" cy="13.6" r="1.9" fill="#777"/><path d="M10.3 14 V17.6" stroke="#777" stroke-width="2.4" stroke-linecap="round"/></svg>
<svg class="b" style="left:1159.50px;top:287.00px;" width="21" height="23" viewBox="0 0 21 23"><rect x="1.3" y="8.6" width="18" height="13" rx="1.2" fill="none" stroke="#777" stroke-width="2.5"/><path d="M5.4 8.6 V6.2 Q5.4 1.3 10.3 1.3 Q15.2 1.3 15.2 6.2 V8.6" fill="none" stroke="#777" stroke-width="2.5"/><circle cx="10.3" cy="13.6" r="1.9" fill="#777"/><path d="M10.3 14 V17.6" stroke="#777" stroke-width="2.4" stroke-linecap="round"/></svg>
<svg class="b" style="left:1322.00px;top:287.00px;" width="21" height="23" viewBox="0 0 21 23"><rect x="1.3" y="8.6" width="18" height="13" rx="1.2" fill="none" stroke="#777" stroke-width="2.5"/><path d="M5.4 8.6 V6.2 Q5.4 1.3 10.3 1.3 Q15.2 1.3 15.2 6.2 V8.6" fill="none" stroke="#777" stroke-width="2.5"/><circle cx="10.3" cy="13.6" r="1.9" fill="#777"/><path d="M10.3 14 V17.6" stroke="#777" stroke-width="2.4" stroke-linecap="round"/></svg>
<svg class="b" style="left:1454.00px;top:287.00px;" width="21" height="23" viewBox="0 0 21 23"><rect x="1.3" y="8.6" width="18" height="13" rx="1.2" fill="none" stroke="#777" stroke-width="2.5"/><path d="M5.4 8.6 V6.2 Q5.4 1.3 10.3 1.3 Q15.2 1.3 15.2 6.2 V8.6" fill="none" stroke="#777" stroke-width="2.5"/><circle cx="10.3" cy="13.6" r="1.9" fill="#777"/><path d="M10.3 14 V17.6" stroke="#777" stroke-width="2.4" stroke-linecap="round"/></svg>
<div class="b" style="left:220.00px;top:324.00px;width:1343.00px;height:1322.00px;background:#fff;"></div>
<div class="b" style="left:0;top:0;width:1563px;height:1619.5px;overflow:hidden;">
<div class="b" style="left:352.00px;top:324.00px;width:1211.00px;height:48.00px;background:#18307a;"></div>
<div class="b" style="left:220.00px;top:372.00px;width:1343.00px;height:2.00px;background:#e1e1e1;"></div>
<span class="t" style="left:290.05px;top:339.18px;font-size:24.00px;color:#8c8c8c;">1</span>
<div class="b" style="left:368.30px;top:332.00px;width:24.00px;height:24.00px;background:#e6e6e6;border:1.5px solid #c4c4c4;border-radius:4px;"></div>
<div class="b" style="left:374.30px;top:342.20px;width:12.00px;height:3.60px;background:#333;border-radius:1px;"></div>
<span class="t" style="left:401.80px;top:332.12px;font-size:26.67px;color:#fff;font-weight:700;">Store Refresh</span>
<span class="t" style="left:1231.92px;top:332.12px;font-size:26.67px;color:#fff;font-weight:700;">24%</span>
<span class="t" style="left:1313.00px;top:332.12px;font-size:26.67px;color:#fff;font-weight:700;">03/27/26</span>
<span class="t" style="left:1445.00px;top:332.12px;font-size:26.67px;color:#fff;font-weight:700;">07/29/26</span>
<svg class="b" style="left:1292.00px;top:363.20px;" width="6" height="8" viewBox="0 0 6 8"><path d="M0 0 L6 4 L0 8 Z" fill="#5a5a5a"/></svg>
<div class="b" style="left:352.00px;top:374.00px;width:1211.00px;height:48.00px;background:#74b0f2;"></div>
<div class="b" style="left:220.00px;top:422.00px;width:1343.00px;height:2.00px;background:#e1e1e1;"></div>
<span class="t" style="left:290.05px;top:389.18px;font-size:24.00px;color:#8c8c8c;">2</span>
<div class="b" style="left:398.30px;top:382.00px;width:24.00px;height:24.00px;background:#e6e6e6;border:1.5px solid #c4c4c4;border-radius:4px;"></div>
<div class="b" style="left:404.30px;top:392.20px;width:12.00px;height:3.60px;background:#333;border-radius:1px;"></div>
<span class="t" style="left:431.80px;top:382.12px;font-size:26.67px;color:#fff;font-weight:700;">Phase 1: Pre-Construction</span>
<span class="t" style="left:1231.92px;top:382.12px;font-size:26.67px;color:#fff;font-weight:700;">81%</span>
<span class="t" style="left:1313.00px;top:382.12px;font-size:26.67px;color:#fff;font-weight:700;">03/27/26</span>
<span class="t" style="left:1445.00px;top:382.12px;font-size:26.67px;color:#fff;font-weight:700;">05/01/26</span>
<svg class="b" style="left:1292.00px;top:413.20px;" width="6" height="8" viewBox="0 0 6 8"><path d="M0 0 L6 4 L0 8 Z" fill="#5a5a5a"/></svg>
<div class="b" style="left:352.00px;top:424.00px;width:1211.00px;height:48.00px;background:#c3ddf9;"></div>
<div class="b" style="left:220.00px;top:472.00px;width:1343.00px;height:2.00px;background:#e1e1e1;"></div>
<span class="t" style="left:290.05px;top:439.18px;font-size:24.00px;color:#8c8c8c;">3</span>
<div class="b" style="left:428.30px;top:432.00px;width:24.00px;height:24.00px;background:#e6e6e6;border:1.5px solid #c4c4c4;border-radius:4px;"></div>
<div class="b" style="left:434.30px;top:442.20px;width:12.00px;height:3.60px;background:#333;border-radius:1px;"></div>
<span class="t" style="left:461.80px;top:432.12px;font-size:26.67px;color:#000;">Planning &amp; Design</span>
<span class="t" style="left:1217.09px;top:432.12px;font-size:26.67px;color:#000;">100%</span>
<span class="t" style="left:1313.00px;top:432.12px;font-size:26.67px;color:#000;">03/27/26</span>
<span class="t" style="left:1445.00px;top:432.12px;font-size:26.67px;color:#000;">04/16/26</span>
<svg class="b" style="left:1292.00px;top:463.20px;" width="6" height="8" viewBox="0 0 6 8"><path d="M0 0 L6 4 L0 8 Z" fill="#5a5a5a"/></svg>
<div class="b" style="left:220.00px;top:522.00px;width:1343.00px;height:2.00px;background:#e1e1e1;"></div>
<span class="t" style="left:290.05px;top:489.18px;font-size:24.00px;color:#8c8c8c;">4</span>
<span class="t" style="left:492.10px;top:482.12px;font-size:26.67px;color:#000;">Review existing store conditions</span>
<span class="t" style="left:930.60px;top:482.12px;font-size:26.67px;color:#000;">Diana Davis</span>
<span class="t" style="left:1217.09px;top:482.12px;font-size:26.67px;color:#000;">100%</span>
<span class="t" style="left:1313.00px;top:482.12px;font-size:26.67px;color:#000;">03/27/26</span>
<span class="t" style="left:1445.00px;top:482.12px;font-size:26.67px;color:#000;">03/30/26</span>
<svg class="b" style="left:1292.00px;top:513.20px;" width="6" height="8" viewBox="0 0 6 8"><path d="M0 0 L6 4 L0 8 Z" fill="#5a5a5a"/></svg>
<div class="b" style="left:220.00px;top:572.00px;width:1343.00px;height:2.00px;background:#e1e1e1;"></div>
<span class="t" style="left:290.05px;top:539.18px;font-size:24.00px;color:#8c8c8c;">5</span>
<span class="t" style="left:492.10px;top:532.12px;font-size:26.67px;color:#000;">Create design concept</span>
<span class="t" style="left:930.60px;top:532.12px;font-size:26.67px;color:#000;">Diana Davis</span>
<span class="t" style="left:1217.09px;top:532.12px;font-size:26.67px;color:#000;">100%</span>
<span class="t" style="left:1313.00px;top:532.12px;font-size:26.67px;color:#000;">03/31/26</span>
<span class="t" style="left:1445.00px;top:532.12px;font-size:26.67px;color:#000;">04/06/26</span>
<svg class="b" style="left:1292.00px;top:563.20px;" width="6" height="8" viewBox="0 0 6 8"><path d="M0 0 L6 4 L0 8 Z" fill="#5a5a5a"/></svg>
<div class="b" style="left:220.00px;top:622.00px;width:1343.00px;height:2.00px;background:#e1e1e1;"></div>
<span class="t" style="left:290.05px;top:589.18px;font-size:24.00px;color:#8c8c8c;">6</span>
<span class="t" style="left:492.10px;top:582.12px;font-size:26.67px;color:#000;">Develop construction drawings</span>
<span class="t" style="left:930.60px;top:582.12px;font-size:26.67px;color:#000;">Diana Davis</span>
<span class="t" style="left:1217.09px;top:582.12px;font-size:26.67px;color:#000;">100%</span>
<span class="t" style="left:1313.00px;top:582.12px;font-size:26.67px;color:#000;">04/07/26</span>
<span class="t" style="left:1445.00px;top:582.12px;font-size:26.67px;color:#000;">04/13/26</span>
<svg class="b" style="left:1292.00px;top:613.20px;" width="6" height="8" viewBox="0 0 6 8"><path d="M0 0 L6 4 L0 8 Z" fill="#5a5a5a"/></svg>
<div class="b" style="left:220.00px;top:672.00px;width:1343.00px;height:2.00px;background:#e1e1e1;"></div>
<span class="t" style="left:290.05px;top:639.18px;font-size:24.00px;color:#8c8c8c;">7</span>
<span class="t" style="left:492.10px;top:632.12px;font-size:26.67px;color:#000;">Create MEP plans</span>
<span class="t" style="left:930.60px;top:632.12px;font-size:26.67px;color:#000;">Diana Davis</span>
<span class="t" style="left:1217.09px;top:632.12px;font-size:26.67px;color:#000;">100%</span>
<span class="t" style="left:1313.00px;top:632.12px;font-size:26.67px;color:#000;">04/14/26</span>
<span class="t" style="left:1445.00px;top:632.12px;font-size:26.67px;color:#000;">04/16/26</span>
<svg class="b" style="left:1292.00px;top:663.20px;" width="6" height="8" viewBox="0 0 6 8"><path d="M0 0 L6 4 L0 8 Z" fill="#5a5a5a"/></svg>
<div class="b" style="left:352.00px;top:674.00px;width:1211.00px;height:48.00px;background:#c3ddf9;"></div>
<div class="b" style="left:220.00px;top:722.00px;width:1343.00px;height:2.00px;background:#e1e1e1;"></div>
<span class="t" style="left:290.05px;top:689.18px;font-size:24.00px;color:#8c8c8c;">8</span>
<div class="b" style="left:428.30px;top:682.00px;width:24.00px;height:24.00px;background:#e6e6e6;border:1.5px solid #c4c4c4;border-radius:4px;"></div>
<div class="b" style="left:434.30px;top:692.20px;width:12.00px;height:3.60px;background:#333;border-radius:1px;"></div>
<span class="t" style="left:461.80px;top:682.12px;font-size:26.67px;color:#000;">Permits &amp; Approvals</span>
<span class="t" style="left:1231.92px;top:682.12px;font-size:26.67px;color:#000;">67%</span>
<span class="t" style="left:1313.00px;top:682.12px;font-size:26.67px;color:#000;">04/17/26</span>
<span class="t" style="left:1445.00px;top:682.12px;font-size:26.67px;color:#000;">05/01/26</span>
<svg class="b" style="left:1292.00px;top:713.20px;" width="6" height="8" viewBox="0 0 6 8"><path d="M0 0 L6 4 L0 8 Z" fill="#5a5a5a"/></svg>
<div class="b" style="left:220.00px;top:772.00px;width:1343.00px;height:2.00px;background:#e1e1e1;"></div>
<span class="t" style="left:290.05px;top:739.18px;font-size:24.00px;color:#8c8c8c;">9</span>
<span class="t" style="left:492.10px;top:732.12px;font-size:26.67px;color:#000;">Submit permit application</span>
<span class="t" style="left:930.60px;top:732.12px;font-size:26.67px;color:#000;">Carla Collins</span>
<span class="t" style="left:1217.09px;top:732.12px;font-size:26.67px;color:#000;">100%</span>
<span class="t" style="left:1313.00px;top:732.12px;font-size:26.67px;color:#000;">04/17/26</span>
<span class="t" style="left:1445.00px;top:732.12px;font-size:26.67px;color:#000;">04/17/26</span>
<svg class="b" style="left:1292.00px;top:763.20px;" width="6" height="8" viewBox="0 0 6 8"><path d="M0 0 L6 4 L0 8 Z" fill="#5a5a5a"/></svg>
<div class="b" style="left:220.00px;top:822.00px;width:1343.00px;height:2.00px;background:#e1e1e1;"></div>
<span class="t" style="left:276.70px;top:789.18px;font-size:24.00px;color:#8c8c8c;">10</span>
<span class="t" style="left:492.10px;top:782.12px;font-size:26.67px;color:#000;">Health department approval</span>
<span class="t" style="left:930.60px;top:782.12px;font-size:26.67px;color:#000;">Carla Collins</span>
<span class="t" style="left:1231.92px;top:782.12px;font-size:26.67px;color:#000;">80%</span>
<span class="t" style="left:1313.00px;top:782.12px;font-size:26.67px;color:#000;">04/20/26</span>
<span class="t" style="left:1445.00px;top:782.12px;font-size:26.67px;color:#000;">05/01/26</span>
<svg class="b" style="left:1292.00px;top:813.20px;" width="6" height="8" viewBox="0 0 6 8"><path d="M0 0 L6 4 L0 8 Z" fill="#5a5a5a"/></svg>
<div class="b" style="left:220.00px;top:872.00px;width:1343.00px;height:2.00px;background:#e1e1e1;"></div>
<span class="t" style="left:278.49px;top:839.18px;font-size:24.00px;color:#8c8c8c;">11</span>
<span class="t" style="left:492.10px;top:832.12px;font-size:26.67px;color:#000;">Building permit approval</span>
<span class="t" style="left:930.60px;top:832.12px;font-size:26.67px;color:#000;">Carla Collins</span>
<span class="t" style="left:1231.92px;top:832.12px;font-size:26.67px;color:#000;">50%</span>
<span class="t" style="left:1313.00px;top:832.12px;font-size:26.67px;color:#000;">04/20/26</span>
<span class="t" style="left:1445.00px;top:832.12px;font-size:26.67px;color:#000;">04/28/26</span>
<svg class="b" style="left:1292.00px;top:863.20px;" width="6" height="8" viewBox="0 0 6 8"><path d="M0 0 L6 4 L0 8 Z" fill="#5a5a5a"/></svg>
<div class="b" style="left:220.00px;top:922.00px;width:1343.00px;height:2.00px;background:#e1e1e1;"></div>
<span class="t" style="left:276.70px;top:889.18px;font-size:24.00px;color:#8c8c8c;">12</span>
<span class="t" style="left:492.10px;top:882.12px;font-size:26.67px;color:#000;">Fire marshal inspection</span>
<span class="t" style="left:930.60px;top:882.12px;font-size:26.67px;color:#000;">Grace Garcia</span>
<span class="t" style="left:1231.92px;top:882.12px;font-size:26.67px;color:#000;">80%</span>
<span class="t" style="left:1313.00px;top:882.12px;font-size:26.67px;color:#000;">04/29/26</span>
<span class="t" style="left:1445.00px;top:882.12px;font-size:26.67px;color:#000;">04/29/26</span>
<svg class="b" style="left:1292.00px;top:913.20px;" width="6" height="8" viewBox="0 0 6 8"><path d="M0 0 L6 4 L0 8 Z" fill="#5a5a5a"/></svg>
<div class="b" style="left:220.00px;top:972.00px;width:1343.00px;height:2.00px;background:#e1e1e1;"></div>
<span class="t" style="left:276.70px;top:939.18px;font-size:24.00px;color:#8c8c8c;">13</span>
<span class="t" style="left:492.10px;top:932.12px;font-size:26.67px;color:#000;">Signage permits</span>
<span class="t" style="left:930.60px;top:932.12px;font-size:26.67px;color:#000;">Carla Collins</span>
<span class="t" style="left:1231.92px;top:932.12px;font-size:26.67px;color:#000;">10%</span>
<span class="t" style="left:1313.00px;top:932.12px;font-size:26.67px;color:#000;">04/20/26</span>
<span class="t" style="left:1445.00px;top:932.12px;font-size:26.67px;color:#000;">04/20/26</span>
<svg class="b" style="left:1292.00px;top:963.20px;" width="6" height="8" viewBox="0 0 6 8"><path d="M0 0 L6 4 L0 8 Z" fill="#5a5a5a"/></svg>
<div class="b" style="left:352.00px;top:974.00px;width:1211.00px;height:48.00px;background:#c3ddf9;"></div>
<div class="b" style="left:220.00px;top:1022.00px;width:1343.00px;height:2.00px;background:#e1e1e1;"></div>
<span class="t" style="left:276.70px;top:989.18px;font-size:24.00px;color:#8c8c8c;">14</span>
<div class="b" style="left:428.30px;top:982.00px;width:24.00px;height:24.00px;background:#e6e6e6;border:1.5px solid #c4c4c4;border-radius:4px;"></div>
<div class="b" style="left:434.30px;top:992.20px;width:12.00px;height:3.60px;background:#333;border-radius:1px;"></div>
<span class="t" style="left:461.80px;top:982.12px;font-size:26.67px;color:#000;">Pre-Construction Meeting</span>
<span class="t" style="left:1231.92px;top:982.12px;font-size:26.67px;color:#000;">33%</span>
<span class="t" style="left:1313.00px;top:982.12px;font-size:26.67px;color:#000;">04/29/26</span>
<span class="t" style="left:1445.00px;top:982.12px;font-size:26.67px;color:#000;">05/01/26</span>
<svg class="b" style="left:1292.00px;top:1013.20px;" width="6" height="8" viewBox="0 0 6 8"><path d="M0 0 L6 4 L0 8 Z" fill="#5a5a5a"/></svg>
<div class="b" style="left:220.00px;top:1072.00px;width:1343.00px;height:2.00px;background:#e1e1e1;"></div>
<span class="t" style="left:276.70px;top:1039.18px;font-size:24.00px;color:#8c8c8c;">15</span>
<span class="t" style="left:492.10px;top:1032.12px;font-size:26.67px;color:#000;">Schedule kickoff meeting</span>
<span class="t" style="left:930.60px;top:1032.12px;font-size:26.67px;color:#000;">Carla Collins</span>
<span class="t" style="left:1217.09px;top:1032.12px;font-size:26.67px;color:#000;">100%</span>
<span class="t" style="left:1313.00px;top:1032.12px;font-size:26.67px;color:#000;">04/29/26</span>
<span class="t" style="left:1445.00px;top:1032.12px;font-size:26.67px;color:#000;">04/29/26</span>
<svg class="b" style="left:1292.00px;top:1063.20px;" width="6" height="8" viewBox="0 0 6 8"><path d="M0 0 L6 4 L0 8 Z" fill="#5a5a5a"/></svg>
<div class="b" style="left:220.00px;top:1122.00px;width:1343.00px;height:2.00px;background:#e1e1e1;"></div>
<span class="t" style="left:276.70px;top:1089.18px;font-size:24.00px;color:#8c8c8c;">16</span>
<span class="t" style="left:492.10px;top:1082.12px;font-size:26.67px;color:#000;">Review scope of work</span>
<span class="t" style="left:930.60px;top:1082.12px;font-size:26.67px;color:#000;">Barry Bennett</span>
<span class="t" style="left:1246.75px;top:1082.12px;font-size:26.67px;color:#000;">0%</span>
<span class="t" style="left:1313.00px;top:1082.12px;font-size:26.67px;color:#000;">04/30/26</span>
<span class="t" style="left:1445.00px;top:1082.12px;font-size:26.67px;color:#000;">04/30/26</span>
<svg class="b" style="left:1292.00px;top:1113.20px;" width="6" height="8" viewBox="0 0 6 8"><path d="M0 0 L6 4 L0 8 Z" fill="#5a5a5a"/></svg>
<div class="b" style="left:220.00px;top:1172.00px;width:1343.00px;height:2.00px;background:#e1e1e1;"></div>
<span class="t" style="left:276.70px;top:1139.18px;font-size:24.00px;color:#8c8c8c;">17</span>
<span class="t" style="left:492.10px;top:1132.12px;font-size:26.67px;color:#000;">Establish project schedule</span>
<span class="t" style="left:930.60px;top:1132.12px;font-size:26.67px;color:#000;">Barry Bennett</span>
<span class="t" style="left:1246.75px;top:1132.12px;font-size:26.67px;color:#000;">0%</span>
<span class="t" style="left:1313.00px;top:1132.12px;font-size:26.67px;color:#000;">05/01/26</span>
<span class="t" style="left:1445.00px;top:1132.12px;font-size:26.67px;color:#000;">05/01/26</span>
<svg class="b" style="left:1292.00px;top:1163.20px;" width="6" height="8" viewBox="0 0 6 8"><path d="M0 0 L6 4 L0 8 Z" fill="#5a5a5a"/></svg>
<div class="b" style="left:352.00px;top:1174.00px;width:1211.00px;height:48.00px;background:#74b0f2;"></div>
<div class="b" style="left:220.00px;top:1222.00px;width:1343.00px;height:2.00px;background:#e1e1e1;"></div>
<span class="t" style="left:276.70px;top:1189.18px;font-size:24.00px;color:#8c8c8c;">18</span>
<div class="b" style="left:398.30px;top:1182.00px;width:24.00px;height:24.00px;background:#e6e6e6;border:1.5px solid #c4c4c4;border-radius:4px;"></div>
<div class="b" style="left:404.30px;top:1192.20px;width:12.00px;height:3.60px;background:#333;border-radius:1px;"></div>
<span class="t" style="left:431.80px;top:1182.12px;font-size:26.67px;color:#fff;font-weight:700;">Phase 2: Demolition</span>
<span class="t" style="left:1246.75px;top:1182.12px;font-size:26.67px;color:#fff;font-weight:700;">0%</span>
<span class="t" style="left:1313.00px;top:1182.12px;font-size:26.67px;color:#fff;font-weight:700;">05/04/26</span>
<span class="t" style="left:1445.00px;top:1182.12px;font-size:26.67px;color:#fff;font-weight:700;">05/12/26</span>
<svg class="b" style="left:1292.00px;top:1213.20px;" width="6" height="8" viewBox="0 0 6 8"><path d="M0 0 L6 4 L0 8 Z" fill="#5a5a5a"/></svg>
<div class="b" style="left:352.00px;top:1224.00px;width:1211.00px;height:48.00px;background:#c3ddf9;"></div>
<div class="b" style="left:220.00px;top:1272.00px;width:1343.00px;height:2.00px;background:#e1e1e1;"></div>
<span class="t" style="left:276.70px;top:1239.18px;font-size:24.00px;color:#8c8c8c;">19</span>
<div class="b" style="left:428.30px;top:1232.00px;width:24.00px;height:24.00px;background:#e6e6e6;border:1.5px solid #c4c4c4;border-radius:4px;"></div>
<div class="b" style="left:434.30px;top:1242.20px;width:12.00px;height:3.60px;background:#333;border-radius:1px;"></div>
<span class="t" style="left:461.80px;top:1232.12px;font-size:26.67px;color:#000;">Site Preparation</span>
<span class="t" style="left:1246.75px;top:1232.12px;font-size:26.67px;color:#000;">0%</span>
<span class="t" style="left:1313.00px;top:1232.12px;font-size:26.67px;color:#000;">05/04/26</span>
<span class="t" style="left:1445.00px;top:1232.12px;font-size:26.67px;color:#000;">05/05/26</span>
<svg class="b" style="left:1292.00px;top:1263.20px;" width="6" height="8" viewBox="0 0 6 8"><path d="M0 0 L6 4 L0 8 Z" fill="#5a5a5a"/></svg>
<div class="b" style="left:220.00px;top:1322.00px;width:1343.00px;height:2.00px;background:#e1e1e1;"></div>
<span class="t" style="left:276.70px;top:1289.18px;font-size:24.00px;color:#8c8c8c;">20</span>
<span class="t" style="left:492.10px;top:1282.12px;font-size:26.67px;color:#000;">Set up construction barriers</span>
<span class="t" style="left:930.60px;top:1282.12px;font-size:26.67px;color:#000;">Barry Bennett</span>
<span class="t" style="left:1246.75px;top:1282.12px;font-size:26.67px;color:#000;">0%</span>
<span class="t" style="left:1313.00px;top:1282.12px;font-size:26.67px;color:#000;">05/04/26</span>
<span class="t" style="left:1445.00px;top:1282.12px;font-size:26.67px;color:#000;">05/04/26</span>
<svg class="b" style="left:1292.00px;top:1313.20px;" width="6" height="8" viewBox="0 0 6 8"><path d="M0 0 L6 4 L0 8 Z" fill="#5a5a5a"/></svg>
<div class="b" style="left:220.00px;top:1372.00px;width:1343.00px;height:2.00px;background:#e1e1e1;"></div>
<span class="t" style="left:276.70px;top:1339.18px;font-size:24.00px;color:#8c8c8c;">21</span>
<span class="t" style="left:492.10px;top:1332.12px;font-size:26.67px;color:#000;">Protect existing utilities</span>
<span class="t" style="left:930.60px;top:1332.12px;font-size:26.67px;color:#000;">Barry Bennett</span>
<span class="t" style="left:1246.75px;top:1332.12px;font-size:26.67px;color:#000;">0%</span>
<span class="t" style="left:1313.00px;top:1332.12px;font-size:26.67px;color:#000;">05/05/26</span>
<span class="t" style="left:1445.00px;top:1332.12px;font-size:26.67px;color:#000;">05/05/26</span>
<svg class="b" style="left:1292.00px;top:1363.20px;" width="6" height="8" viewBox="0 0 6 8"><path d="M0 0 L6 4 L0 8 Z" fill="#5a5a5a"/></svg>
<div class="b" style="left:220.00px;top:1422.00px;width:1343.00px;height:2.00px;background:#e1e1e1;"></div>
<span class="t" style="left:276.70px;top:1389.18px;font-size:24.00px;color:#8c8c8c;">22</span>
<span class="t" style="left:492.10px;top:1382.12px;font-size:26.67px;color:#000;">Establish material staging area</span>
<span class="t" style="left:930.60px;top:1382.12px;font-size:26.67px;color:#000;">Barry Bennett</span>
<span class="t" style="left:1246.75px;top:1382.12px;font-size:26.67px;color:#000;">0%</span>
<span class="t" style="left:1313.00px;top:1382.12px;font-size:26.67px;color:#000;">05/05/26</span>
<span class="t" style="left:1445.00px;top:1382.12px;font-size:26.67px;color:#000;">05/05/26</span>
<svg class="b" style="left:1292.00px;top:1413.20px;" width="6" height="8" viewBox="0 0 6 8"><path d="M0 0 L6 4 L0 8 Z" fill="#5a5a5a"/></svg>
<div class="b" style="left:352.00px;top:1424.00px;width:1211.00px;height:48.00px;background:#c3ddf9;"></div>
<div class="b" style="left:220.00px;top:1472.00px;width:1343.00px;height:2.00px;background:#e1e1e1;"></div>
<span class="t" style="left:276.70px;top:1439.18px;font-size:24.00px;color:#8c8c8c;">23</span>
<div class="b" style="left:428.30px;top:1432.00px;width:24.00px;height:24.00px;background:#e6e6e6;border:1.5px solid #c4c4c4;border-radius:4px;"></div>
<div class="b" style="left:434.30px;top:1442.20px;width:12.00px;height:3.60px;background:#333;border-radius:1px;"></div>
<span class="t" style="left:461.80px;top:1432.12px;font-size:26.67px;color:#000;">Interior Demolition</span>
<span class="t" style="left:1246.75px;top:1432.12px;font-size:26.67px;color:#000;">0%</span>
<span class="t" style="left:1313.00px;top:1432.12px;font-size:26.67px;color:#000;">05/06/26</span>
<span class="t" style="left:1445.00px;top:1432.12px;font-size:26.67px;color:#000;">05/08/26</span>
<svg class="b" style="left:1292.00px;top:1463.20px;" width="6" height="8" viewBox="0 0 6 8"><path d="M0 0 L6 4 L0 8 Z" fill="#5a5a5a"/></svg>
<div class="b" style="left:220.00px;top:1554.00px;width:1343.00px;height:2.00px;background:#e1e1e1;"></div>
<span class="t" style="left:276.70px;top:1489.18px;font-size:24.00px;color:#8c8c8c;">24</span>
<span class="t" style="left:492.10px;top:1482.12px;font-size:26.67px;color:#000;">Remove existing furniture and</span>
<span class="t" style="left:492.10px;top:1514.72px;font-size:26.67px;color:#000;">fixtures</span>
<span class="t" style="left:930.60px;top:1482.12px;font-size:26.67px;color:#000;">Barry Bennett</span>
<span class="t" style="left:1246.75px;top:1482.12px;font-size:26.67px;color:#000;">0%</span>
<span class="t" style="left:1313.00px;top:1482.12px;font-size:26.67px;color:#000;">05/06/26</span>
<span class="t" style="left:1445.00px;top:1482.12px;font-size:26.67px;color:#000;">05/07/26</span>
<svg class="b" style="left:1292.00px;top:1545.20px;" width="6" height="8" viewBox="0 0 6 8"><path d="M0 0 L6 4 L0 8 Z" fill="#5a5a5a"/></svg>
<div class="b" style="left:220.00px;top:1604.00px;width:1343.00px;height:2.00px;background:#e1e1e1;"></div>
<span class="t" style="left:276.70px;top:1571.18px;font-size:24.00px;color:#8c8c8c;">25</span>
<span class="t" style="left:492.10px;top:1564.12px;font-size:26.67px;color:#000;">Demo old kitchen equipment</span>
<span class="t" style="left:930.60px;top:1564.12px;font-size:26.67px;color:#000;">Barry Bennett</span>
<span class="t" style="left:1246.75px;top:1564.12px;font-size:26.67px;color:#000;">0%</span>
<span class="t" style="left:1313.00px;top:1564.12px;font-size:26.67px;color:#000;">05/08/26</span>
<span class="t" style="left:1445.00px;top:1564.12px;font-size:26.67px;color:#000;">05/08/26</span>
<svg class="b" style="left:1292.00px;top:1595.20px;" width="6" height="8" viewBox="0 0 6 8"><path d="M0 0 L6 4 L0 8 Z" fill="#5a5a5a"/></svg>
<div class="b" style="left:220.00px;top:1654.00px;width:1343.00px;height:2.00px;background:#e1e1e1;"></div>
<span class="t" style="left:276.70px;top:1621.18px;font-size:24.00px;color:#8c8c8c;">26</span>
<span class="t" style="left:492.10px;top:1614.12px;font-size:26.67px;color:#000;">Remove ceiling tiles and lighting</span>
<span class="t" style="left:930.60px;top:1614.12px;font-size:26.67px;color:#000;">Barry Bennett</span>
<span class="t" style="left:1246.75px;top:1614.12px;font-size:26.67px;color:#000;">0%</span>
<span class="t" style="left:1313.00px;top:1614.12px;font-size:26.67px;color:#000;">05/08/26</span>
<span class="t" style="left:1445.00px;top:1614.12px;font-size:26.67px;color:#000;">05/08/26</span>
<svg class="b" style="left:1292.00px;top:1645.20px;" width="6" height="8" viewBox="0 0 6 8"><path d="M0 0 L6 4 L0 8 Z" fill="#5a5a5a"/></svg>
<div class="b" style="left:916.00px;top:324.00px;width:2.00px;height:1300.00px;background:#e1e1e1;"></div>
<div class="b" style="left:1136.00px;top:324.00px;width:2.00px;height:1300.00px;background:#e1e1e1;"></div>
<div class="b" style="left:1298.00px;top:324.00px;width:2.00px;height:1300.00px;background:#e1e1e1;"></div>
<div class="b" style="left:1430.00px;top:324.00px;width:2.00px;height:1300.00px;background:#e1e1e1;"></div>
</div>
<div class="b" style="left:220.00px;top:320.00px;width:2688.00px;height:4.00px;background:#4d65a7;"></div>
<div class="b" style="left:220.00px;top:1615.50px;width:132.00px;height:31.00px;background:#f8f7f5;"></div>
<div class="b" style="left:422.00px;top:1628.00px;width:462.00px;height:16.00px;background:#a0a0a0;border-radius:8px;"></div>
<div class="b" style="left:1562.00px;top:208.00px;width:2.00px;height:1438.00px;background:#ececec;"></div>
<div class="b" style="left:1564.00px;top:208.00px;width:4.00px;height:1438.00px;background:#c6c6c6;"></div>
<div class="b" style="left:1568px;top:192px;width:1340px;height:128px;overflow:hidden;">
<span class="t" style="left:-207.50px;top:26.95px;font-size:26.16px;color:#3d3d3d;letter-spacing:-0.763px;font-weight:700;">Mar</span>
<span class="t" style="left:280.50px;top:26.95px;font-size:26.16px;color:#3d3d3d;letter-spacing:-0.028px;font-weight:700;">Apr</span>
<span class="t" style="left:765.00px;top:26.95px;font-size:26.16px;color:#3d3d3d;letter-spacing:0.552px;font-weight:700;">May</span>
<span class="t" style="left:1256.00px;top:26.95px;font-size:26.16px;color:#3d3d3d;letter-spacing:-0.257px;font-weight:700;">Jun</span>
<span class="t" style="left:-81.57px;top:67.32px;font-size:26.20px;color:#444;letter-spacing:-0.082px;">Mar 22</span>
<span class="t" style="left:30.43px;top:67.32px;font-size:26.20px;color:#444;letter-spacing:-0.082px;">Mar 29</span>
<span class="t" style="left:151.85px;top:67.32px;font-size:26.20px;color:#444;letter-spacing:-0.078px;">Apr 5</span>
<span class="t" style="left:256.60px;top:67.32px;font-size:26.20px;color:#444;letter-spacing:-0.077px;">Apr 12</span>
<span class="t" style="left:368.60px;top:67.32px;font-size:26.20px;color:#444;letter-spacing:-0.077px;">Apr 19</span>
<span class="t" style="left:480.60px;top:67.32px;font-size:26.20px;color:#444;letter-spacing:-0.077px;">Apr 26</span>
<span class="t" style="left:595.51px;top:67.32px;font-size:26.20px;color:#444;letter-spacing:-0.089px;">May 3</span>
<span class="t" style="left:700.26px;top:67.32px;font-size:26.20px;color:#444;letter-spacing:-0.086px;">May 10</span>
<span class="t" style="left:812.26px;top:67.32px;font-size:26.20px;color:#444;letter-spacing:-0.086px;">May 17</span>
<span class="t" style="left:924.26px;top:67.32px;font-size:26.20px;color:#444;letter-spacing:-0.086px;">May 24</span>
<span class="t" style="left:1036.26px;top:67.32px;font-size:26.20px;color:#444;letter-spacing:-0.086px;">May 31</span>
<span class="t" style="left:1159.11px;top:67.32px;font-size:26.20px;color:#444;letter-spacing:-0.080px;">Jun 7</span>
<span class="t" style="left:1263.86px;top:67.32px;font-size:26.20px;color:#444;letter-spacing:-0.079px;">Jun 14</span>
<div class="b" style="left:62.00px;top:90.00px;width:2.00px;height:38.00px;background:#cfcfcf;"></div>
<div class="b" style="left:542.00px;top:90.00px;width:2.00px;height:38.00px;background:#cfcfcf;"></div>
<div class="b" style="left:1038.00px;top:90.00px;width:2.00px;height:38.00px;background:#cfcfcf;"></div>
</div>
<svg class="b" style="left:2880.00px;top:300.00px;" width="14" height="14" viewBox="0 0 14 14"><path d="M1.5 1.5 L12.5 12.5 M12.5 1.5 L1.5 12.5" stroke="#444" stroke-width="2.6" stroke-linecap="round"/></svg>
<div class="b" style="left:1568.00px;top:324.00px;width:1340.00px;height:1322.00px;background:#fff;"></div>
<div class="b" style="left:2886.00px;top:330.00px;width:16.00px;height:683.50px;background:#a0a0a0;border-radius:8px;"></div>
<div class="b" style="left:1743.00px;top:1628.00px;width:501.00px;height:16.00px;background:#a0a0a0;border-radius:8px;"></div>
<svg class="b" style="left:1568px;top:324px;overflow:hidden" width="1310" height="1296" viewBox="1568 324 1310 1296"><rect x="1582.5" y="324" width="1.3" height="1296" fill="#f0f0ef"/><rect x="1694.5" y="324" width="1.3" height="1296" fill="#f0f0ef"/><rect x="1806.5" y="324" width="1.3" height="1296" fill="#f0f0ef"/><rect x="1918.5" y="324" width="1.3" height="1296" fill="#f0f0ef"/><rect x="2030.5" y="324" width="1.3" height="1296" fill="#f0f0ef"/><rect x="2142.5" y="324" width="1.3" height="1296" fill="#f0f0ef"/><rect x="2254.5" y="324" width="1.3" height="1296" fill="#f0f0ef"/><rect x="2366.5" y="324" width="1.3" height="1296" fill="#f0f0ef"/><rect x="2478.5" y="324" width="1.3" height="1296" fill="#f0f0ef"/><rect x="2590.5" y="324" width="1.3" height="1296" fill="#f0f0ef"/><rect x="2702.5" y="324" width="1.3" height="1296" fill="#f0f0ef"/><rect x="2814.5" y="324" width="1.3" height="1296" fill="#f0f0ef"/><rect x="2926.5" y="324" width="1.3" height="1296" fill="#f0f0ef"/><rect x="1630" y="324" width="2" height="1296" fill="#d9d9d9"/><rect x="2110" y="324" width="2" height="1296" fill="#d9d9d9"/><rect x="2606" y="324" width="2" height="1296" fill="#d9d9d9"/><rect x="1568" y="324" width="1310" height="48" fill="#18307a"/><rect x="1568" y="372" width="1310" height="2" fill="#e1e1e1"/><rect x="1568" y="374" width="1310" height="48" fill="#74b0f2"/><rect x="1568" y="422" width="1310" height="2" fill="#e1e1e1"/><rect x="1568" y="424" width="1310" height="48" fill="#c3ddf9"/><rect x="1568" y="472" width="1310" height="2" fill="#e1e1e1"/><rect x="1568" y="522" width="1310" height="2" fill="#e1e1e1"/><rect x="1568" y="572" width="1310" height="2" fill="#e1e1e1"/><rect x="1568" y="622" width="1310" height="2" fill="#e1e1e1"/><rect x="1568" y="672" width="1310" height="2" fill="#e1e1e1"/><rect x="1568" y="674" width="1310" height="48" fill="#c3ddf9"/><rect x="1568" y="722" width="1310" height="2" fill="#e1e1e1"/><rect x="1568" y="772" width="1310" height="2" fill="#e1e1e1"/><rect x="1568" y="822" width="1310" height="2" fill="#e1e1e1"/><rect x="1568" y="872" width="1310" height="2" fill="#e1e1e1"/><rect x="1568" y="922" width="1310" height="2" fill="#e1e1e1"/><rect x="1568" y="972" width="1310" height="2" fill="#e1e1e1"/><rect x="1568" y="974" width="1310" height="48" fill="#c3ddf9"/><rect x="1568" y="1022" width="1310" height="2" fill="#e1e1e1"/><rect x="1568" y="1072" width="1310" height="2" fill="#e1e1e1"/><rect x="1568" y="1122" width="1310" height="2" fill="#e1e1e1"/><rect x="1568" y="1172" width="1310" height="2" fill="#e1e1e1"/><rect x="1568" y="1174" width="1310" height="48" fill="#74b0f2"/><rect x="1568" y="1222" width="1310" height="2" fill="#e1e1e1"/><rect x="1568" y="1224" width="1310" height="48" fill="#c3ddf9"/><rect x="1568" y="1272" width="1310" height="2" fill="#e1e1e1"/><rect x="1568" y="1322" width="1310" height="2" fill="#e1e1e1"/><rect x="1568" y="1372" width="1310" height="2" fill="#e1e1e1"/><rect x="1568" y="1422" width="1310" height="2" fill="#e1e1e1"/><rect x="1568" y="1424" width="1310" height="48" fill="#c3ddf9"/><rect x="1568" y="1472" width="1310" height="2" fill="#e1e1e1"/><rect x="1568" y="1554" width="1310" height="2" fill="#e1e1e1"/><rect x="1568" y="1604" width="1310" height="2" fill="#e1e1e1"/><rect x="1568" y="1654" width="1310" height="2" fill="#e1e1e1"/><defs><linearGradient id="shd" x1="0" x2="1" y1="0" y2="0"><stop offset="0" stop-color="#000" stop-opacity=".13"/><stop offset="1" stop-color="#000" stop-opacity="0"/></linearGradient></defs><rect x="1568" y="324" width="9" height="1296" fill="url(#shd)"/><rect x="1552.0" y="334.0" width="2000.0" height="22.0" fill="#cfcfcf"/><path d="M1552.0 335.0 H3552.0 M1552.0 355.0 H3552.0" stroke="#9c9c9c" stroke-width="2"/><rect x="1554.0" y="338.0" width="481.0" height="14.0" fill="#e6e6e6"/><path d="M1554.0 339.0 H2034.0 V351.0 H1554.0" fill="none" stroke="#a2a2a2" stroke-width="2"/><polygon points="1552.0,384.0 2128.0,384.0 2128.0,418.2 2120.0,406.0 1560.0,406.0 1552.0,418.2" fill="#cfcfcf"/><path d="M1552.0 385.0 H2128.0 M1559.6 405.0 H2120.4" stroke="#9c9c9c" stroke-width="2" fill="none"/><path d="M1552.6 384.0 V417.0 L1560.0 405.4 M2127.4 384.0 V417.0 L2120.0 405.4" stroke="#a8a8a8" stroke-width="1.3" fill="none"/><rect x="1554.0" y="388.0" width="464.6" height="14.0" fill="#e6e6e6"/><path d="M1554.0 389.0 H2017.6 V401.0 H1554.0" fill="none" stroke="#a2a2a2" stroke-width="2"/><polygon points="1552.0,434.0 1888.0,434.0 1888.0,468.2 1880.0,456.0 1560.0,456.0 1552.0,468.2" fill="#cfcfcf"/><path d="M1552.0 435.0 H1888.0 M1559.6 455.0 H1880.4" stroke="#9c9c9c" stroke-width="2" fill="none"/><path d="M1552.6 434.0 V467.0 L1560.0 455.4 M1887.4 434.0 V467.0 L1880.0 455.4" stroke="#a8a8a8" stroke-width="1.3" fill="none"/><rect x="1554.0" y="438.0" width="332.8" height="14.0" fill="#e6e6e6"/><path d="M1554.0 439.0 H1885.8 V451.0 H1554.0" fill="none" stroke="#a2a2a2" stroke-width="2"/><rect x="1552.9" y="485.0" width="62.2" height="26.0" fill="#cce4f4" stroke="#bfc0c1" stroke-width="1.8"/><rect x="1553.8" y="490.0" width="60.3" height="16.0" fill="#e6f2fa"/><path d="M1553.8 491.0 H1613.1 V505.0 H1553.8" fill="none" stroke="#a3b1ba" stroke-width="2"/><rect x="1616.9" y="535.0" width="110.2" height="26.0" fill="#cce4f4" stroke="#bfc0c1" stroke-width="1.8"/><rect x="1617.8" y="540.0" width="108.3" height="16.0" fill="#e6f2fa"/><path d="M1617.8 541.0 H1725.1 V555.0 H1617.8" fill="none" stroke="#a3b1ba" stroke-width="2"/><rect x="1728.9" y="585.0" width="110.2" height="26.0" fill="#cce4f4" stroke="#bfc0c1" stroke-width="1.8"/><rect x="1729.8" y="590.0" width="108.3" height="16.0" fill="#e6f2fa"/><path d="M1729.8 591.0 H1837.1 V605.0 H1729.8" fill="none" stroke="#a3b1ba" stroke-width="2"/><rect x="1840.9" y="635.0" width="46.2" height="26.0" fill="#cce4f4" stroke="#bfc0c1" stroke-width="1.8"/><rect x="1841.8" y="640.0" width="44.3" height="16.0" fill="#e6f2fa"/><path d="M1841.8 641.0 H1885.1 V655.0 H1841.8" fill="none" stroke="#a3b1ba" stroke-width="2"/><polygon points="1888.0,684.0 2128.0,684.0 2128.0,718.2 2120.0,706.0 1896.0,706.0 1888.0,718.2" fill="#cfcfcf"/><path d="M1888.0 685.0 H2128.0 M1895.6 705.0 H2120.4" stroke="#9c9c9c" stroke-width="2" fill="none"/><path d="M1888.6 684.0 V717.0 L1896.0 705.4 M2127.4 684.0 V717.0 L2120.0 705.4" stroke="#a8a8a8" stroke-width="1.3" fill="none"/><rect x="1890.0" y="688.0" width="158.8" height="14.0" fill="#e6e6e6"/><path d="M1890.0 689.0 H2047.8 V701.0 H1890.0" fill="none" stroke="#a2a2a2" stroke-width="2"/><rect x="1888.9" y="735.0" width="14.2" height="26.0" fill="#cce4f4" stroke="#bfc0c1" stroke-width="1.8"/><rect x="1889.8" y="740.0" width="12.3" height="16.0" fill="#e6f2fa"/><path d="M1889.8 741.0 H1901.1 V755.0 H1889.8" fill="none" stroke="#a3b1ba" stroke-width="2"/><rect x="1936.9" y="785.0" width="190.2" height="26.0" fill="#cce4f4" stroke="#bfc0c1" stroke-width="1.8"/><rect x="1937.8" y="790.0" width="151.8" height="16.0" fill="#e6f2fa"/><path d="M1937.8 791.0 H2088.6 V805.0 H1937.8" fill="none" stroke="#a3b1ba" stroke-width="2"/><rect x="1936.9" y="835.0" width="142.2" height="26.0" fill="#cce4f4" stroke="#bfc0c1" stroke-width="1.8"/><rect x="1937.8" y="840.0" width="70.2" height="16.0" fill="#e6f2fa"/><path d="M1937.8 841.0 H2007.0 V855.0 H1937.8" fill="none" stroke="#a3b1ba" stroke-width="2"/><rect x="2080.9" y="885.0" width="14.2" height="26.0" fill="#cce4f4" stroke="#bfc0c1" stroke-width="1.8"/><rect x="2081.8" y="890.0" width="11.0" height="16.0" fill="#e6f2fa"/><path d="M2081.8 891.0 H2091.8 V905.0 H2081.8" fill="none" stroke="#a3b1ba" stroke-width="2"/><rect x="1936.9" y="935.0" width="14.2" height="26.0" fill="#cce4f4" stroke="#bfc0c1" stroke-width="1.8"/><rect x="1937.8" y="940.0" width="2.7" height="16.0" fill="#e6f2fa"/><path d="M1937.8 941.0 H1939.5 V955.0 H1937.8" fill="none" stroke="#a3b1ba" stroke-width="2"/><polygon points="2080.0,984.0 2128.0,984.0 2128.0,1018.2 2120.0,1006.0 2088.0,1006.0 2080.0,1018.2" fill="#cfcfcf"/><path d="M2080.0 985.0 H2128.0 M2087.6 1005.0 H2120.4" stroke="#9c9c9c" stroke-width="2" fill="none"/><path d="M2080.6 984.0 V1017.0 L2088.0 1005.4 M2127.4 984.0 V1017.0 L2120.0 1005.4" stroke="#a8a8a8" stroke-width="1.3" fill="none"/><rect x="2082.0" y="988.0" width="13.8" height="14.0" fill="#e6e6e6"/><path d="M2082.0 989.0 H2094.8 V1001.0 H2082.0" fill="none" stroke="#a2a2a2" stroke-width="2"/><rect x="2080.9" y="1035.0" width="14.2" height="26.0" fill="#cce4f4" stroke="#bfc0c1" stroke-width="1.8"/><rect x="2081.8" y="1040.0" width="12.3" height="16.0" fill="#e6f2fa"/><path d="M2081.8 1041.0 H2093.1 V1055.0 H2081.8" fill="none" stroke="#a3b1ba" stroke-width="2"/><rect x="2096.9" y="1085.0" width="14.2" height="26.0" fill="#cce4f4" stroke="#bfc0c1" stroke-width="1.8"/><rect x="2112.9" y="1135.0" width="14.2" height="26.0" fill="#cce4f4" stroke="#bfc0c1" stroke-width="1.8"/><polygon points="2160.0,1184.0 2304.0,1184.0 2304.0,1218.2 2296.0,1206.0 2168.0,1206.0 2160.0,1218.2" fill="#cfcfcf"/><path d="M2160.0 1185.0 H2304.0 M2167.6 1205.0 H2296.4" stroke="#9c9c9c" stroke-width="2" fill="none"/><path d="M2160.6 1184.0 V1217.0 L2168.0 1205.4 M2303.4 1184.0 V1217.0 L2296.0 1205.4" stroke="#a8a8a8" stroke-width="1.3" fill="none"/><polygon points="2160.0,1234.0 2192.0,1234.0 2192.0,1268.2 2184.0,1256.0 2168.0,1256.0 2160.0,1268.2" fill="#cfcfcf"/><path d="M2160.0 1235.0 H2192.0 M2167.6 1255.0 H2184.4" stroke="#9c9c9c" stroke-width="2" fill="none"/><path d="M2160.6 1234.0 V1267.0 L2168.0 1255.4 M2191.4 1234.0 V1267.0 L2184.0 1255.4" stroke="#a8a8a8" stroke-width="1.3" fill="none"/><rect x="2160.9" y="1285.0" width="14.2" height="26.0" fill="#cce4f4" stroke="#bfc0c1" stroke-width="1.8"/><rect x="2176.9" y="1335.0" width="14.2" height="26.0" fill="#cce4f4" stroke="#bfc0c1" stroke-width="1.8"/><rect x="2176.9" y="1385.0" width="14.2" height="26.0" fill="#cce4f4" stroke="#bfc0c1" stroke-width="1.8"/><polygon points="2192.0,1434.0 2240.0,1434.0 2240.0,1468.2 2232.0,1456.0 2200.0,1456.0 2192.0,1468.2" fill="#cfcfcf"/><path d="M2192.0 1435.0 H2240.0 M2199.6 1455.0 H2232.4" stroke="#9c9c9c" stroke-width="2" fill="none"/><path d="M2192.6 1434.0 V1467.0 L2200.0 1455.4 M2239.4 1434.0 V1467.0 L2232.0 1455.4" stroke="#a8a8a8" stroke-width="1.3" fill="none"/><rect x="2192.9" y="1485.0" width="30.2" height="26.0" fill="#cce4f4" stroke="#bfc0c1" stroke-width="1.8"/><rect x="2224.9" y="1567.0" width="14.2" height="26.0" fill="#cce4f4" stroke="#bfc0c1" stroke-width="1.8"/><rect x="2224.9" y="1617.0" width="14.2" height="26.0" fill="#cce4f4" stroke="#bfc0c1" stroke-width="1.8"/><path d="M1599 324 V1620" stroke="#3c3a38" stroke-width="2" stroke-dasharray="6 4" fill="none"/><path d="M1616.0 507.3 H1623.0 V527.0" fill="none" stroke="#3a3a3a" stroke-width="2"/><path d="M1618.0 524.3 L1628.0 524.3 L1623.0 530.0 Z" fill="#3a3a3a"/><path d="M1728.0 557.3 H1735.0 V577.0" fill="none" stroke="#3a3a3a" stroke-width="2"/><path d="M1730.0 574.3 L1740.0 574.3 L1735.0 580.0 Z" fill="#3a3a3a"/><path d="M1840.0 607.3 H1847.0 V627.0" fill="none" stroke="#3a3a3a" stroke-width="2"/><path d="M1842.0 624.3 L1852.0 624.3 L1847.0 630.0 Z" fill="#3a3a3a"/><path d="M1888.0 657.3 H1895.0 V727.0" fill="none" stroke="#3a3a3a" stroke-width="2"/><path d="M1890.0 724.3 L1900.0 724.3 L1895.0 730.0 Z" fill="#3a3a3a"/><path d="M1904.0 757.3 H1943.0 V927.0" fill="none" stroke="#3a3a3a" stroke-width="2"/><path d="M1938.0 774.3 L1948.0 774.3 L1943.0 780.0 Z" fill="#3a3a3a"/><path d="M1938.0 824.3 L1948.0 824.3 L1943.0 830.0 Z" fill="#3a3a3a"/><path d="M1938.0 924.3 L1948.0 924.3 L1943.0 930.0 Z" fill="#3a3a3a"/><path d="M2080.0 857.3 H2087.0 V1027.0" fill="none" stroke="#3a3a3a" stroke-width="2"/><path d="M2082.0 874.3 L2092.0 874.3 L2087.0 880.0 Z" fill="#3a3a3a"/><path d="M2082.0 1024.3 L2092.0 1024.3 L2087.0 1030.0 Z" fill="#3a3a3a"/><path d="M2096.0 1057.3 H2103.0 V1077.0" fill="none" stroke="#3a3a3a" stroke-width="2"/><path d="M2098.0 1074.3 L2108.0 1074.3 L2103.0 1080.0 Z" fill="#3a3a3a"/><path d="M2112.0 1107.3 H2119.0 V1127.0" fill="none" stroke="#3a3a3a" stroke-width="2"/><path d="M2114.0 1124.3 L2124.0 1124.3 L2119.0 1130.0 Z" fill="#3a3a3a"/><path d="M2128.0 1157.3 H2167.0 V1277.0" fill="none" stroke="#3a3a3a" stroke-width="2"/><path d="M2162.0 1174.3 L2172.0 1174.3 L2167.0 1180.0 Z" fill="#3a3a3a"/><path d="M2162.0 1274.3 L2172.0 1274.3 L2167.0 1280.0 Z" fill="#3a3a3a"/><path d="M2176.0 1307.3 H2183.0 V1377.0" fill="none" stroke="#3a3a3a" stroke-width="2"/><path d="M2178.0 1324.3 L2188.0 1324.3 L2183.0 1330.0 Z" fill="#3a3a3a"/><path d="M2178.0 1374.3 L2188.0 1374.3 L2183.0 1380.0 Z" fill="#3a3a3a"/><path d="M2192.0 1407.3 H2199.0 V1477.0" fill="none" stroke="#3a3a3a" stroke-width="2"/><path d="M2194.0 1474.3 L2204.0 1474.3 L2199.0 1480.0 Z" fill="#3a3a3a"/><path d="M2224.0 1507.3 H2231.0 V1609.0" fill="none" stroke="#3a3a3a" stroke-width="2"/><path d="M2226.0 1556.3 L2236.0 1556.3 L2231.0 1562.0 Z" fill="#3a3a3a"/><path d="M2226.0 1606.3 L2236.0 1606.3 L2231.0 1612.0 Z" fill="#3a3a3a"/><text x="2138.2" y="401.9" font-size="22.60" letter-spacing="-0.131" fill="#444">Phase 1: Pre-Construction</text><text x="1898.2" y="451.9" font-size="22.60" letter-spacing="-0.328" fill="#444">Planning &amp; Design</text><text x="1626.2" y="501.9" font-size="22.60" letter-spacing="0.046" fill="#444">Review existing store conditions</text><text x="1738.2" y="551.9" font-size="22.60" letter-spacing="0.123" fill="#444">Create design concept</text><text x="1850.2" y="601.9" font-size="22.60" letter-spacing="0.130" fill="#444">Develop construction drawings</text><text x="1898.2" y="651.9" font-size="22.60" letter-spacing="-0.326" fill="#444">Create MEP plans</text><text x="2138.2" y="701.9" font-size="22.60" letter-spacing="-0.143" fill="#444">Permits &amp; Approvals</text><text x="1914.2" y="751.9" font-size="22.60" letter-spacing="0.132" fill="#444">Submit permit application</text><text x="2138.2" y="801.9" font-size="22.60" letter-spacing="0.128" fill="#444">Health department approval</text><text x="2090.2" y="851.9" font-size="22.60" letter-spacing="-0.011" fill="#444">Building permit approval</text><text x="2106.2" y="901.9" font-size="22.60" letter-spacing="-0.101" fill="#444">Fire marshal inspection</text><text x="1962.2" y="951.9" font-size="22.60" letter-spacing="-0.101" fill="#444">Signage permits</text><text x="2138.2" y="1001.9" font-size="22.60" letter-spacing="0.167" fill="#444">Pre-Construction Meeting</text><text x="2106.2" y="1051.9" font-size="22.60" letter-spacing="0.133" fill="#444">Schedule kickoff meeting</text><text x="2122.2" y="1101.9" font-size="22.60" letter-spacing="-0.006" fill="#444">Review scope of work</text><text x="2138.2" y="1151.9" font-size="22.60" letter-spacing="0.026" fill="#444">Establish project schedule</text><text x="2314.2" y="1201.9" font-size="22.60" letter-spacing="-0.214" fill="#444">Phase 2: Demolition</text><text x="2202.2" y="1251.9" font-size="22.60" letter-spacing="-0.144" fill="#444">Site Preparation</text><text x="2186.2" y="1301.9" font-size="22.60" letter-spacing="0.131" fill="#444">Set up construction barriers</text><text x="2202.2" y="1351.9" font-size="22.60" letter-spacing="0.169" fill="#444">Protect existing utilities</text><text x="2202.2" y="1401.9" font-size="22.60" letter-spacing="-0.091" fill="#444">Establish material staging area</text><text x="2250.2" y="1451.9" font-size="22.60" letter-spacing="0.012" fill="#444">Interior Demolition</text><text x="2234.2" y="1501.9" font-size="22.60" letter-spacing="0.039" fill="#444">Remove existing furniture and fixtures</text><text x="2250.2" y="1583.9" font-size="22.60" letter-spacing="0.051" fill="#444">Demo old kitchen equipment</text><text x="2250.2" y="1633.9" font-size="22.60" letter-spacing="-0.574" fill="#444">Remove ceiling tiles and lighting</text></svg>
<div class="b" style="left:220.00px;top:320.00px;width:2688.00px;height:4.00px;background:#52669f;"></div>
<div class="b" style="left:1562.00px;top:208.00px;width:2.00px;height:1438.00px;background:#f2f0ee;"></div>
<div class="b" style="left:1564.00px;top:208.00px;width:4.00px;height:1438.00px;background:#c6c6c6;"></div>
<div class="b" style="left:2908.00px;top:192.00px;width:2.00px;height:1454.00px;background:#dcdcdc;"></div>
<div class="b" style="left:2910.00px;top:192.00px;width:98.00px;height:1454.00px;background:#fff;"></div>
<svg class="b" style="left:2942.00px;top:228.00px;" width="40" height="35" viewBox="0 0 40 35"><g fill="none" stroke="#444" stroke-width="3" stroke-linecap="round" stroke-linejoin="round"><path d="M3 1.5 H37 Q38.5 1.5 38.5 3 V26 Q38.5 27.5 37 27.5 H17 L10.3 32.6 V27.5 H3 Q1.5 27.5 1.5 26 V3 Q1.5 1.5 3 1.5 Z"/></g></svg>
<svg class="b" style="left:2941.90px;top:319.90px;" width="41" height="41" viewBox="0 0 41 41"><g fill="none" stroke="#444" stroke-width="3.1" stroke-linecap="round" stroke-linejoin="round"><g transform="translate(20.1 20) scale(.89) translate(-19.3 -19.9) rotate(-43.2)"><path stroke-width="3.4" d="M11.5 26.2 H-1.5 A5.1 5.1 0 0 0 -1.5 36.4 H16.9 A9.15 9.15 0 0 0 16.9 18.1 H-15 A9.85 9.85 0 0 0 -15 37.8 H-6.8"/></g></g></svg>
<svg class="b" style="left:2942.00px;top:415.70px;" width="40" height="41" viewBox="0 0 40 41"><g fill="none" stroke="#444" stroke-width="3" stroke-linecap="round" stroke-linejoin="round"><path d="M11.9 1.8 H28.4 M8.9 7.6 H31.4"/><path d="M3 13.9 H37 Q38.5 13.9 38.5 15.4 V30.5 Q38.5 38.7 30 38.7 H3 Q1.5 38.7 1.5 37.2 V15.4 Q1.5 13.9 3 13.9 Z"/><path d="M38.5 29.8 H31 Q29.5 29.8 29.5 31.3 V38.7"/></g></svg>
<svg class="b" style="left:2942.00px;top:512.00px;" width="41" height="40" viewBox="0 0 41 40"><g fill="none" stroke="#444" stroke-width="3" stroke-linecap="round" stroke-linejoin="round"><path d="M31.6 38 H1.9 V1.9 H35.8 V24" stroke-linecap="butt" stroke-linejoin="miter" stroke-width="3.2"/><path d="M31.6 23 H40.2 L35.9 29.4 Z" fill="#444" stroke-width="1.2"/></g></svg>
<span class="t" style="left:2953.40px;top:515.61px;font-size:32.00px;color:#444;font-weight:700;transform:scaleX(.68);transform-origin:0 0;-webkit-text-stroke:1.3px #444;">B</span>
<svg class="b" style="left:2943.30px;top:610.00px;" width="38" height="36" viewBox="0 0 38 36"><g fill="none" stroke="#444" stroke-width="3" stroke-linecap="round" stroke-linejoin="round"><path d="M10.19 4.76 A15.5 15.5 0 0 0 20.56 33.25"/><path d="M9.60 13.13 L10.19 4.76 L1.79 5.05"/><path d="M15.71 2.64 A15.5 15.5 0 0 1 26.61 31.04"/><path d="M27.20 22.67 L26.61 31.04 L35.01 30.75"/><path d="M12.1 18.4 L16.9 23.3 L24.7 14.2" stroke-width="3.3"/></g></svg>
<svg class="b" style="left:2946.00px;top:704.40px;" width="32" height="40" viewBox="0 0 32 40"><g fill="none" stroke="#444" stroke-width="3" stroke-linecap="round" stroke-linejoin="round"><path d="M1.5 3 Q1.5 1.5 3 1.5 H20 Q30.5 1.5 30.5 12 V37 Q30.5 38.5 29 38.5 H3 Q1.5 38.5 1.5 37 Z"/><path d="M19.2 1.5 V10.2 Q19.2 11.7 20.7 11.7 H30.4"/><path d="M15.9 32.2 V18 M10.2 23.6 L15.9 17.8 L21.8 23.6"/></g></svg>
<svg class="b" style="left:2942.00px;top:799.40px;" width="40" height="41" viewBox="0 0 40 41"><g fill="none" stroke="#444" stroke-width="3" stroke-linecap="round" stroke-linejoin="round"><circle cx="20" cy="20.4" r="18.3"/><path d="M6.8 20.4 H14.8 L18.1 13.8 L24.4 27.7 L27.4 20.4 H33.3"/></g></svg>
<svg class="b" style="left:2942.00px;top:896.00px;" width="41" height="40" viewBox="0 0 41 40"><g fill="none" stroke="#444" stroke-width="3" stroke-linecap="round" stroke-linejoin="round"><path d="M11.1 7.2 V3 Q11.1 1.5 12.6 1.5 H36.8 Q38.3 1.5 38.3 3 V27 Q38.3 38.2 27 38.2 H12.6 Q11.1 38.2 11.1 36.7 V32.6"/><path d="M38.3 27.9 H29.2 Q27.7 27.9 27.7 29.4 V38.2"/><rect x="1.8" y="7.4" width="14.5" height="25" rx="1.6"/><path d="M7 14.4 H11 M7 19.8 H11 M7 25.4 H11" stroke-width="2.8"/></g></svg>
<svg class="b" style="left:2942.00px;top:996.50px;" width="41" height="31" viewBox="0 0 41 31"><g fill="none" stroke="#444" stroke-width="3" stroke-linecap="round" stroke-linejoin="round"><circle cx="10.8" cy="7.3" r="4.9"/><path d="M16.7 17.8 H12.5 Q1.6 17.8 1.6 28.8"/><rect x="22.5" y="5.4" width="15.8" height="5.6" rx=".8"/><rect x="22.5" y="19.7" width="12.5" height="5.5" rx=".8"/></g></svg>
<svg class="b" style="left:2942.00px;top:1088.00px;" width="40" height="40" viewBox="0 0 40 40"><g fill="none" stroke="#444" stroke-width="3" stroke-linecap="round" stroke-linejoin="round"><rect x="1.5" y="1.5" width="37" height="37" rx="1.8"/><path d="M10.8 31.4 V18.7 M16.9 31.4 V8.7 M22.9 31.4 V14.8 M28.9 31.4 V20.8" stroke-width="3" stroke-linecap="butt"/></g></svg>
<svg class="b" style="left:2940.57px;top:1182.30px;" width="43" height="43" viewBox="0 0 43 43"><g fill="none" stroke="#262626" stroke-width="3" stroke-linecap="round" stroke-linejoin="round"><g transform="translate(21.5 21.5) rotate(-45)"><path d="M-28 0 H-19.1 M19.1 0 H28" stroke-linecap="butt"/><path d="M-6.8 -7.1 H-11.5 A7.6 7.1 0 0 0 -11.5 7.1 H-6.8 Z"/><path d="M-6.8 -4.7 H-0.4 M-6.8 4.7 H-0.4" stroke-linecap="butt"/><path d="M6.8 -7.1 H11.5 A7.6 7.1 0 0 1 11.5 7.1 H6.8 Z"/></g></g></svg>
<svg class="b" style="left:2939.00px;top:1275.00px;" width="48" height="48" viewBox="0 0 48 48"><path d="M18.10 13.20 Q19.74 27.96 34.50 29.60 Q19.74 31.24 18.10 46.00 Q16.46 31.24 1.70 29.60 Q16.46 27.96 18.10 13.20 Z" fill="#444" stroke="#444" stroke-width="1" stroke-linejoin="round"/><path d="M36.00 1.20 Q37.03 10.47 46.30 11.50 Q37.03 12.53 36.00 21.80 Q34.97 12.53 25.70 11.50 Q34.97 10.47 36.00 1.20 Z" fill="#444" stroke="#444" stroke-width="1" stroke-linejoin="round"/></svg>
<svg class="b" style="left:2938.50px;top:1381.50px;" width="47" height="28" viewBox="0 0 47 28"><g fill="none" stroke="#000" stroke-width="2.2" stroke-linecap="round" stroke-linejoin="round"><path d="M1.4 14.3 C9 6.5 16 2.5 23.5 2.5 S38 6.5 45.6 14.3 C38 21.2 31 25.2 23.5 25.2 S9 21.2 1.4 14.3 Z"/><circle cx="23.5" cy="12.1" r="9.6"/><circle cx="23.5" cy="11.8" r="4.9" fill="#000" stroke="none"/></g></svg>
</div>
</body></html>
